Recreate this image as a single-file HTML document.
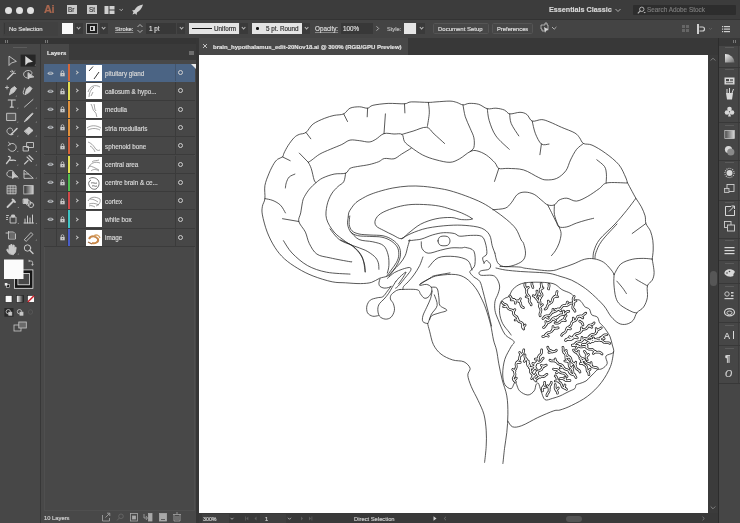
<!DOCTYPE html>
<html><head><meta charset="utf-8">
<style>
*{margin:0;padding:0;box-sizing:border-box}
html,body{width:740px;height:523px;overflow:hidden;background:#353535;font-family:"Liberation Sans",sans-serif;color:#d8d8d8;-webkit-font-smoothing:antialiased}
.t,.nm{will-change:transform;-webkit-text-stroke:0.18px currentColor}
.a{position:absolute}
.t{position:absolute;white-space:nowrap;font-size:6.2px;line-height:8px;color:#dcdcdc}
.chev{position:absolute;width:8px;height:11px;background:#3a3a3a}
.chev:after{content:"";position:absolute;left:2.6px;top:3.3px;width:2.2px;height:2.2px;border-right:0.9px solid #bbb;border-bottom:0.9px solid #bbb;transform:rotate(45deg)}
.row{position:absolute;left:44px;width:151px;height:18.3px;background:#474747;border-bottom:1px solid #3b3b3b}
.row .eye{position:absolute;left:0;top:0;width:13px;height:17.3px;border-right:1px solid #3b3b3b}
.row .lk{position:absolute;left:13px;top:0;width:10.5px;height:17.3px;border-right:1px solid #3b3b3b}
.row .bar{position:absolute;left:24px;top:0;width:2.3px;height:17.3px}
.row .th{position:absolute;left:41.5px;top:1px;width:15.7px;height:16px;background:#fff}
.row .nm{position:absolute;left:60.5px;top:5.7px;font-size:6.3px;line-height:8px;color:#d6d6d6;white-space:nowrap}
.row .sep{position:absolute;left:131px;top:0;width:1px;height:17.3px;background:#3b3b3b}
.row .ci{position:absolute;left:133.5px;top:6.2px;width:5px;height:5px;border:0.8px solid #cfcfcf;border-radius:50%}
.row .cv{position:absolute;left:31px;top:7.2px;width:3px;height:3px;border-right:0.9px solid #c8c8c8;border-top:0.9px solid #c8c8c8;transform:rotate(45deg)}
.dk{position:absolute;left:719px;width:21px;height:1px;background:#383838}
.dg{position:absolute;left:725px;width:9px;height:1px;background:#5a5a5a}
</style></head><body>
<!-- title bar -->
<div class="a" style="left:0;top:0;width:740px;height:19px;background:#3c3c3c"></div>
<div class="a" style="left:5px;top:6.5px;width:7px;height:7px;border-radius:50%;background:#e0e0e0"></div>
<div class="a" style="left:16px;top:6.5px;width:7px;height:7px;border-radius:50%;background:#e0e0e0"></div>
<div class="a" style="left:27px;top:6.5px;width:7px;height:7px;border-radius:50%;background:#e0e0e0"></div>
<div class="t" style="left:43.5px;top:2.5px;font-size:11px;line-height:12px;font-weight:bold;color:#a9674f;letter-spacing:-0.5px">Ai</div>
<div class="a" style="left:67px;top:5px;width:10px;height:9.3px;background:#c9c9c9"></div>
<div class="t" style="left:68.3px;top:5.6px;font-size:6.3px;line-height:8px;color:#3c3c3c">Br</div>
<div class="a" style="left:87px;top:5px;width:9.5px;height:9.3px;background:#c9c9c9"></div>
<div class="t" style="left:88.5px;top:5.6px;font-size:6.3px;line-height:8px;color:#3c3c3c">St</div>
<svg class="a" style="left:104px;top:5px" width="22" height="10" viewBox="0 0 22 10"><rect x="0.5" y="1" width="4" height="8" fill="#d0d0d0"/><rect x="5.5" y="1" width="5" height="3.5" fill="#d0d0d0"/><rect x="5.5" y="5.5" width="5" height="3.5" fill="#d0d0d0"/><path d="M15.5 4 L17.2 5.7 L18.9 4" stroke="#bbb" stroke-width="0.9" fill="none"/></svg>
<svg class="a" style="left:131px;top:3.5px" width="13" height="12" viewBox="0 0 13 12"><path d="M12 0.5 C8 1 5 3 3.5 6 L1 6.5 L2.5 8 L1.5 10.5 L4 9.5 L5.5 11 L6 8.5 C9 7 11 4 12 0.5Z" fill="#cfcfcf"/></svg>
<div class="t" style="left:549px;top:6.2px;font-size:7.2px;font-weight:bold;color:#d6d6d6">Essentials Classic</div>
<svg class="a" style="left:614px;top:6px" width="8" height="8"><path d="M1.5 3 L4 5.5 L6.5 3" stroke="#bbb" stroke-width="0.9" fill="none"/></svg>
<div class="a" style="left:633px;top:5px;width:103px;height:10px;background:#2d2d2d;border-radius:1px"></div>
<svg class="a" style="left:636px;top:6px" width="10" height="8"><circle cx="5.8" cy="3.3" r="2.2" stroke="#bdbdbd" stroke-width="0.9" fill="none"/><path d="M4.3 4.8 L1.8 7.3" stroke="#bdbdbd" stroke-width="1.1"/><path d="M7.5 6 L8.7 7.2 L9.9 6" fill="#bdbdbd"/></svg>
<div class="t" style="left:647px;top:6px;font-size:6.4px;color:#7a7a7a">Search Adobe Stock</div>

<!-- control bar -->
<div class="a" style="left:0;top:19px;width:740px;height:19px;background:#444444"></div>
<div class="a" style="left:0;top:18.5px;width:740px;height:1px;background:#333"></div>
<div class="a" style="left:3px;top:22px;width:55px;height:13.5px;background:#414141"></div>
<div class="a" style="left:4px;top:23px;width:1px;height:11px;background:#373737"></div>
<div class="t" style="left:8.5px;top:24.6px;font-size:5.95px">No Selection</div>
<div class="a" style="left:62px;top:23px;width:11px;height:11px;background:#fafafa"></div>
<div class="chev" style="left:74.5px;top:23px"></div>
<div class="a" style="left:86px;top:23px;width:12px;height:11px;background:#1e1e1e;border:1px solid #9a9a9a"></div>
<div class="a" style="left:89.5px;top:26px;width:5px;height:5px;background:#d0d0d0"></div>
<div class="a" style="left:90.7px;top:27.2px;width:2.6px;height:2.6px;background:#1e1e1e"></div>
<div class="chev" style="left:99.5px;top:23px"></div>
<div class="t" style="left:114.5px;top:24.5px;font-size:5.8px;text-decoration:underline;text-decoration-color:#888">Stroke:</div>
<svg class="a" style="left:136px;top:22px" width="8" height="13"><path d="M1.5 5 L4 2.5 L6.5 5 M1.5 8 L4 10.5 L6.5 8" stroke="#bdbdbd" stroke-width="0.9" fill="none"/></svg>
<div class="a" style="left:146px;top:23px;width:30px;height:11px;background:#383838"></div>
<div class="t" style="left:149px;top:24.5px;font-size:6.3px">1 pt</div>
<div class="chev" style="left:177px;top:23px"></div>
<div class="a" style="left:189px;top:23.3px;width:50px;height:10.7px;background:#e4e4e4"></div>
<div class="a" style="left:191.5px;top:28px;width:20px;height:1.4px;background:#111"></div>
<div class="t" style="left:214px;top:24.7px;font-size:6.3px;color:#333">Uniform</div>
<div class="chev" style="left:239.5px;top:23px"></div>
<div class="a" style="left:252px;top:23.3px;width:49.5px;height:10.7px;background:#e4e4e4"></div>
<div class="a" style="left:256px;top:27.3px;width:2.6px;height:2.6px;border-radius:50%;background:#111"></div>
<div class="t" style="left:266px;top:24.7px;font-size:6.3px;color:#333">5 pt. Round</div>
<div class="chev" style="left:302px;top:23px"></div>
<div class="t" style="left:315px;top:24.5px;font-size:6.3px;text-decoration:underline;text-decoration-color:#888">Opacity:</div>
<div class="a" style="left:341px;top:23px;width:32px;height:11px;background:#383838"></div>
<div class="t" style="left:343px;top:24.5px;font-size:6.3px">100%</div>
<svg class="a" style="left:374px;top:24px" width="7" height="9"><path d="M2.5 2.3 L4.7 4.5 L2.5 6.7" stroke="#bbb" stroke-width="0.9" fill="none"/></svg>
<div class="t" style="left:386.5px;top:24.5px;font-size:5.65px;color:#bdbdbd">Style:</div>
<div class="a" style="left:404px;top:23.3px;width:11.5px;height:10.7px;background:#e6e6e6"></div>
<div class="chev" style="left:417px;top:23px"></div>
<div class="a" style="left:432.5px;top:23px;width:56px;height:11px;background:#474747;border:1px solid #555;border-radius:1.5px"></div>
<div class="t" style="left:438px;top:24.5px;font-size:6.0px;color:#dedede">Document Setup</div>
<div class="a" style="left:491.5px;top:23px;width:41.5px;height:11px;background:#474747;border:1px solid #555;border-radius:1.5px"></div>
<div class="t" style="left:497px;top:24.5px;font-size:5.8px;color:#dedede">Preferences</div>
<svg class="a" style="left:538px;top:22px" width="22" height="13" viewBox="0 0 22 13"><path d="M3 3 h4 v-2 h2 v2 h1 v4 h-2 v2 h-4 v-2 h-1z" fill="none" stroke="#c8c8c8" stroke-width="0.8"/><path d="M6 5 L11 8 L8 8.6 L7 11 Z" fill="#d8d8d8"/><path d="M14 5 L16.2 7.2 L18.4 5" stroke="#bbb" stroke-width="0.9" fill="none"/></svg>
<svg class="a" style="left:680px;top:23px" width="55" height="12" viewBox="0 0 55 12"><g fill="#666"><rect x="2" y="2" width="3" height="3"/><rect x="6" y="2" width="3" height="3"/><rect x="2" y="6" width="3" height="3"/><rect x="6" y="6" width="3" height="3"/></g><rect x="17" y="1" width="2" height="10" fill="#cfcfcf"/><path d="M19.5 4 h3 a2 2 0 0 1 0 4 h-3" stroke="#cfcfcf" stroke-width="1.2" fill="none"/><path d="M29 5 L30.5 6.5 L32 5" stroke="#666" stroke-width="0.8" fill="none"/><g fill="#cfcfcf"><rect x="42" y="3" width="1.2" height="1.2"/><rect x="44" y="3" width="6" height="1.2"/><rect x="42" y="5.5" width="1.2" height="1.2"/><rect x="44" y="5.5" width="6" height="1.2"/><rect x="42" y="8" width="1.2" height="1.2"/><rect x="44" y="8" width="6" height="1.2"/></g></svg>

<!-- panel grip bar -->
<div class="a" style="left:0;top:38px;width:199px;height:6px;background:#353535"></div>
<div class="a" style="left:5px;top:40px;width:1px;height:3px;background:#7a7a7a"></div>
<div class="a" style="left:7px;top:40px;width:1px;height:3px;background:#7a7a7a"></div>
<div class="a" style="left:45px;top:40px;width:1px;height:3px;background:#7a7a7a"></div>
<div class="a" style="left:47px;top:40px;width:1px;height:3px;background:#7a7a7a"></div>

<!-- tools panel -->
<div class="a" style="left:0;top:44px;width:40px;height:479px;background:#474747"></div>
<div class="a" style="left:40px;top:44px;width:1.2px;height:479px;background:#373737"></div>
<div class="a" style="left:13px;top:47px;width:14px;height:1px;background:#5c5c5c"></div>
<svg class="a" style="left:0;top:0" width="41" height="340" viewBox="0 0 41 340">
<g fill="none" stroke="#c9c9c9" stroke-width="0.9" stroke-linejoin="round" stroke-linecap="round">
<!-- row1 selection -->
<path d="M9 56.5 L9 65.5 L11.3 63 L16 61.5 Z"/>
</g>
<rect x="20.6" y="54.6" width="15" height="12" fill="#262626"/>
<path d="M25.3 56 L25.3 65.5 L28 62.8 L33 61.8 Z" fill="#d6d6d6"/>
<path d="M34.5 65.5 l1.2 0 l0 -1.2z" fill="#aaa"/>
<g fill="none" stroke="#c9c9c9" stroke-width="0.9" stroke-linejoin="round" stroke-linecap="round">
<!-- row2 magic wand / lasso -->
<path d="M7.5 79 L13.5 73" stroke-width="1.5"/>
<path d="M12 70.3 l0.6 1.5 M14.5 71 l-1 1 M15.5 73.5 l-1.5 -0.3 M10.5 71.5 l1 0.5"/>
<path d="M27 78 C22 77 22.5 71 28 70.5 C32 70.5 33 73 31 75"/>
<path d="M28 73 L28 79 L30 77.5 L33.5 77 Z" fill="#c9c9c9"/>
<!-- row3 pen -->
<path d="M5.5 87.5 h3 M7 86 v3"/>
<path d="M9.5 94.5 L11 89 L14.5 86.5 L16.5 88.5 L14 92 Z" fill="#c9c9c9"/>
<path d="M23.5 94 C22 91 25 90 24.5 88"/>
<path d="M25 94.5 L26.5 89 L30 86.5 L32 88.5 L29.5 92 Z" fill="#c9c9c9"/>
<!-- row4 type / line -->
<path d="M8.3 100 h7 M11.8 100 v7.2 M10.3 107.2 h3" stroke-width="1.2"/>
<path d="M24.5 107 L33 99.5"/>
<!-- row5 rect / brush -->
<rect x="7" y="113.3" width="8.7" height="7.2" fill="#5a5a5a"/>
<path d="M24.5 121.5 L27 118 L32.5 113 L33 113.8 L28 119.3 Z" fill="#c9c9c9"/>
<!-- row6 shaper / eraser -->
<path d="M13 134.5 C9 136 5.5 132 7.5 129.3 C9.5 127 13 128 12.5 130.5"/>
<path d="M11 134.5 L17 128.5" stroke-width="1.6"/>
<path d="M24.5 131 L29 127 L33 130.5 L28.5 134.5 Z" fill="#c9c9c9"/>
<!-- row7 rotate / scale -->
<path d="M10 144 A4 4 0 1 1 8.5 149" />
<path d="M8.5 142.3 L10.5 144.2 L8.2 145.5"/>
<rect x="27" y="142.5" width="6.5" height="5"/>
<rect x="23.5" y="146.5" width="5" height="4.5"/>
<!-- row8 warp / pin -->
<path d="M6.5 163.5 L10 159 C11 157.5 9.5 156 8.5 156.5 M9 160 C11 161 13 159.5 15.5 160.5" stroke-width="1.3"/>
<path d="M24.5 164 L28 160.5 M27 157 L31.5 161.5 M29 155.5 L33 159.5" stroke-width="1.1"/>
<!-- row9 shape builder / perspective -->
<path d="M13 177 C8 178 5.5 175 7.5 172 C9.5 169.5 14 170 14 173"/>
<path d="M12.5 172 L12.5 178.5 L14.5 177 L17.5 177 Z" fill="#c9c9c9"/>
<path d="M24 178 L24 170 L33 178 Z"/><path d="M24 174 L28.5 174"/>
<!-- row10 mesh / gradient -->
<rect x="7.5" y="185.8" width="8.5" height="8" fill="#666"/>
<path d="M7.5 188.5 h8.5 M7.5 191 h8.5 M10.3 185.8 v8 M13 185.8 v8" stroke-width="0.6"/>
</g>
<defs><linearGradient id="gr" x1="0" x2="1"><stop offset="0" stop-color="#2a2a2a"/><stop offset="1" stop-color="#d0d0d0"/></linearGradient>
<linearGradient id="gr2" x1="0" x2="1"><stop offset="0" stop-color="#fff"/><stop offset="1" stop-color="#222"/></linearGradient></defs>
<rect x="23.8" y="185.6" width="9.4" height="8.4" fill="url(#gr)" stroke="#c9c9c9" stroke-width="0.8"/>
<g fill="none" stroke="#c9c9c9" stroke-width="0.9" stroke-linejoin="round" stroke-linecap="round">
<!-- row11 eyedropper / blend -->
<path d="M7.5 207 L14 200.5 M12.5 199.5 L15 202" stroke-width="1.8"/>
<rect x="23.5" y="199" width="4.5" height="4.5" fill="#c9c9c9"/>
<circle cx="31" cy="205" r="2.6"/><circle cx="28.5" cy="203" r="2.4"/>
<!-- row12 symbol / graph -->
<path d="M6.5 215.5 h2 M6.5 217.5 h1.2 M6.5 219.5 h1.2"/>
<rect x="10.5" y="217" width="5.5" height="6"/><rect x="12" y="215" width="2.5" height="2" fill="#c9c9c9"/>
<path d="M24 223 h9.5 M25 223 v-4 M27.5 223 v-7 M30 223 v-5 M32.5 223 v-8" stroke-width="1"/>
<!-- row13 artboard / slice -->
<path d="M6 233 h3 M8.5 231.5 v7.5 h7 v-5 l-2 -2 h-5"/>
<rect x="9.5" y="233" width="5.5" height="5.5" fill="#6a6a6a" stroke="none"/>
<path d="M24.5 239.5 L31 232.5 L33 234.5 L26.5 241 Z"/>
<!-- row14 hand / zoom -->
<path d="M9 253.5 C7 251 6 249.5 7.5 249 L9 250.5 L9 245.5 L10.2 245.5 L10.5 249 L10.8 244.5 L12 244.5 L12.2 249 L13 245 L14.2 245.2 L14.3 249.5 L15.2 247 L16.2 247.5 L15.5 252 L13.5 254.5 Z" fill="#c9c9c9"/>
<circle cx="27.5" cy="248" r="3.2" stroke-width="1"/><path d="M29.8 250.3 L33 253.5" stroke-width="1.4"/>
<!-- swap + default -->
<path d="M29.5 261 h1.6 a1.5 1.5 0 0 1 1.5 1.5 v2" stroke-width="0.8"/>
<path d="M28.8 260.3 v1.4 l1 -0.7z M31.8 264.5 h1.6 l-0.8 1z" fill="#c9c9c9" stroke-width="0.4"/>
</g>
<!-- stroke box -->
<rect x="14" y="269.5" width="19.3" height="19.2" fill="#e6e6e6"/>
<rect x="14.8" y="270.3" width="17.7" height="17.6" fill="#151515"/>
<rect x="17.5" y="273" width="12.3" height="12.2" fill="#e6e6e6"/>
<rect x="18.3" y="273.8" width="10.7" height="10.6" fill="#474747"/>
<!-- fill box -->
<rect x="4" y="259.5" width="19.5" height="19.5" fill="#fbfbfb"/>
<!-- default tiny -->
<rect x="6.5" y="284.5" width="3" height="3" fill="#1a1a1a" stroke="#ddd" stroke-width="0.6"/>
<rect x="4.8" y="283" width="2.6" height="2.6" fill="#eee"/>
<!-- color / gradient / none -->
<rect x="5.2" y="295.5" width="6.8" height="6.8" fill="#fafafa" stroke="#222" stroke-width="0.6"/>
<rect x="16.6" y="295.5" width="6.9" height="6.8" fill="url(#gr2)" stroke="#222" stroke-width="0.6"/>
<rect x="27.5" y="295.5" width="6.9" height="6.8" fill="#fafafa" stroke="#222" stroke-width="0.6"/>
<path d="M27.8 302 L34 295.8" stroke="#d0202a" stroke-width="1.5"/>
<!-- draw modes -->
<rect x="4.4" y="308" width="9.1" height="8.7" fill="#2a2a2a"/>
<g fill="none" stroke="#c9c9c9" stroke-width="0.8">
<circle cx="8.3" cy="311.7" r="2.2"/><rect x="8.8" y="312.2" width="3" height="3" fill="#c9c9c9"/>
<circle cx="19.5" cy="311.7" r="2.2"/><rect x="20" y="312.2" width="3" height="3" fill="#c9c9c9"/>
<circle cx="30.5" cy="312" r="2.2" stroke="#5a5a5a"/>
<!-- screen mode -->
<rect x="14" y="325" width="7" height="6" />
<rect x="18.8" y="322" width="7.5" height="6" fill="#6a6a6a"/>
</g>
<!-- small corner triangles -->
<g fill="#b0b0b0">
<path d="M15.5 96.5 l1.2 0 l0 -1.2z"/><path d="M17 108.5 l1.2 0 l0 -1.2z"/><path d="M35.5 108.5 l1.2 0 l0 -1.2z"/>
<path d="M17 122.5 l1.2 0 l0 -1.2z"/><path d="M35.5 122.5 l1.2 0 l0 -1.2z"/><path d="M17 136.5 l1.2 0 l0 -1.2z"/><path d="M35.5 136.5 l1.2 0 l0 -1.2z"/>
<path d="M17 152 l1.2 0 l0 -1.2z"/><path d="M35.5 152 l1.2 0 l0 -1.2z"/><path d="M17 165.5 l1.2 0 l0 -1.2z"/><path d="M35.5 165.5 l1.2 0 l0 -1.2z"/>
<path d="M17.5 178.5 l1.2 0 l0 -1.2z"/><path d="M35.5 178.5 l1.2 0 l0 -1.2z"/><path d="M17.5 208 l1.2 0 l0 -1.2z"/>
<path d="M17.5 224 l1.2 0 l0 -1.2z"/><path d="M35.5 224 l1.2 0 l0 -1.2z"/><path d="M35.5 240.5 l1.2 0 l0 -1.2z"/><path d="M17.5 254.5 l1.2 0 l0 -1.2z"/>
</g>
</svg>


<!-- layers panel -->
<div class="a" style="left:41.2px;top:44px;width:155px;height:479px;background:#484848"></div>
<div class="a" style="left:69px;top:44px;width:127px;height:16px;background:#3a3a3a"></div>
<div class="t" style="left:46.5px;top:49px;font-size:6.0px;font-weight:bold;color:#e2e2e2">Layers</div>
<div class="a" style="left:188.5px;top:50.5px;width:5.5px;height:4px;background:#6e6e6e"></div>
<div class="a" style="left:44px;top:64px;width:151px;height:447px;border:1px solid #4f4f4f;border-top:none"></div>
<div class="row" style="top:64.0px;background:#4b6484;border-bottom-color:#4b6484"><div class="eye" style="border-right-color:#4b6484"><svg class="a" style="left:2.8px;top:6.6px" width="8" height="5"><path d="M0.3 2.2 C1.8 0.1 5.2 0.1 6.7 2.2 C5.2 4.3 1.8 4.3 0.3 2.2Z" fill="#c4c8cc"/><ellipse cx="3.5" cy="2.2" rx="1.6" ry="1.1" fill="#4b6484" opacity="0.55"/></svg></div><div class="lk" style="border-right-color:#4b6484"><svg class="a" style="left:2.7px;top:5.5px" width="5" height="7"><path d="M1.2 3 V2 a1.3 1.3 0 0 1 2.6 0 V3" stroke="#c8c8c8" stroke-width="0.8" fill="none"/><rect x="0.3" y="3" width="4.4" height="3.3" fill="#c8c8c8"/><rect x="2.2" y="4" width="0.6" height="1.2" fill="#4b6484"/></svg></div><div class="bar" style="background:#d4673a"></div><div class="cv"></div><svg class="a" style="left:41.5px;top:1px" width="16" height="16"><rect width="16" height="16" fill="#fff"/><g fill="none" stroke="#222" stroke-width="0.9"><path d="M3 6 L7 1.5 M8 14 L13 7" /></g></svg><div class="nm">pituitary gland</div><div class="sep" style="background:#42556e"></div><div class="ci"></div><svg class="a" style="left:146.5px;top:0" width="5" height="5"><path d="M0 0 H5 V5Z" fill="#e8e8e8"/></svg></div>
<div class="row" style="top:82.3px;background:#474747;border-bottom-color:#3b3b3b"><div class="eye" style="border-right-color:#3b3b3b"><svg class="a" style="left:2.8px;top:6.6px" width="8" height="5"><path d="M0.3 2.2 C1.8 0.1 5.2 0.1 6.7 2.2 C5.2 4.3 1.8 4.3 0.3 2.2Z" fill="#c4c8cc"/><ellipse cx="3.5" cy="2.2" rx="1.6" ry="1.1" fill="#474747" opacity="0.55"/></svg></div><div class="lk" style="border-right-color:#3b3b3b"><svg class="a" style="left:2.7px;top:5.5px" width="5" height="7"><path d="M1.2 3 V2 a1.3 1.3 0 0 1 2.6 0 V3" stroke="#c8c8c8" stroke-width="0.8" fill="none"/><rect x="0.3" y="3" width="4.4" height="3.3" fill="#c8c8c8"/><rect x="2.2" y="4" width="0.6" height="1.2" fill="#474747"/></svg></div><div class="bar" style="background:#e3de52"></div><div class="cv"></div><svg class="a" style="left:41.5px;top:1px" width="16" height="16"><rect width="16" height="16" fill="#fff"/><g fill="none" stroke="#666" stroke-width="0.6"><path d="M2 9 C4 3 9 1 14 4 M3 14 C3 10 5 6 8 4 M5 13 L7 9" /></g></svg><div class="nm">callosum &amp; hypo...</div><div class="sep" style="background:#3b3b3b"></div><div class="ci"></div></div>
<div class="row" style="top:100.6px;background:#474747;border-bottom-color:#3b3b3b"><div class="eye" style="border-right-color:#3b3b3b"><svg class="a" style="left:2.8px;top:6.6px" width="8" height="5"><path d="M0.3 2.2 C1.8 0.1 5.2 0.1 6.7 2.2 C5.2 4.3 1.8 4.3 0.3 2.2Z" fill="#c4c8cc"/><ellipse cx="3.5" cy="2.2" rx="1.6" ry="1.1" fill="#474747" opacity="0.55"/></svg></div><div class="lk" style="border-right-color:#3b3b3b"><svg class="a" style="left:2.7px;top:5.5px" width="5" height="7"><path d="M1.2 3 V2 a1.3 1.3 0 0 1 2.6 0 V3" stroke="#c8c8c8" stroke-width="0.8" fill="none"/><rect x="0.3" y="3" width="4.4" height="3.3" fill="#c8c8c8"/><rect x="2.2" y="4" width="0.6" height="1.2" fill="#474747"/></svg></div><div class="bar" style="background:#e0913c"></div><div class="cv"></div><svg class="a" style="left:41.5px;top:1px" width="16" height="16"><rect width="16" height="16" fill="#fff"/><g fill="none" stroke="#666" stroke-width="0.6"><path d="M5 2 C7 5 6 8 9 10 C11 12 10 14 11 15 M8 2 C9 5 8 7 10 9" /></g></svg><div class="nm">medulla</div><div class="sep" style="background:#3b3b3b"></div><div class="ci"></div></div>
<div class="row" style="top:118.9px;background:#474747;border-bottom-color:#3b3b3b"><div class="eye" style="border-right-color:#3b3b3b"><svg class="a" style="left:2.8px;top:6.6px" width="8" height="5"><path d="M0.3 2.2 C1.8 0.1 5.2 0.1 6.7 2.2 C5.2 4.3 1.8 4.3 0.3 2.2Z" fill="#c4c8cc"/><ellipse cx="3.5" cy="2.2" rx="1.6" ry="1.1" fill="#474747" opacity="0.55"/></svg></div><div class="lk" style="border-right-color:#3b3b3b"><svg class="a" style="left:2.7px;top:5.5px" width="5" height="7"><path d="M1.2 3 V2 a1.3 1.3 0 0 1 2.6 0 V3" stroke="#c8c8c8" stroke-width="0.8" fill="none"/><rect x="0.3" y="3" width="4.4" height="3.3" fill="#c8c8c8"/><rect x="2.2" y="4" width="0.6" height="1.2" fill="#474747"/></svg></div><div class="bar" style="background:#e0913c"></div><div class="cv"></div><svg class="a" style="left:41.5px;top:1px" width="16" height="16"><rect width="16" height="16" fill="#fff"/><g fill="none" stroke="#666" stroke-width="0.6"><path d="M1 8 C5 5 10 5 15 8 M2 10 C6 8 10 8 14 10" /></g></svg><div class="nm">stria medullaris</div><div class="sep" style="background:#3b3b3b"></div><div class="ci"></div></div>
<div class="row" style="top:137.2px;background:#474747;border-bottom-color:#3b3b3b"><div class="eye" style="border-right-color:#3b3b3b"></div><div class="lk" style="border-right-color:#3b3b3b"><svg class="a" style="left:2.7px;top:5.5px" width="5" height="7"><path d="M1.2 3 V2 a1.3 1.3 0 0 1 2.6 0 V3" stroke="#c8c8c8" stroke-width="0.8" fill="none"/><rect x="0.3" y="3" width="4.4" height="3.3" fill="#c8c8c8"/><rect x="2.2" y="4" width="0.6" height="1.2" fill="#474747"/></svg></div><div class="bar" style="background:#d2603a"></div><div class="cv"></div><svg class="a" style="left:41.5px;top:1px" width="16" height="16"><rect width="16" height="16" fill="#fff"/><g fill="none" stroke="#666" stroke-width="0.6"><path d="M2 4 C5 5 7 7 9 10 C10 12 12 13 14 12 M4 8 C6 9 8 11 9 14" /></g></svg><div class="nm">sphenoid bone</div><div class="sep" style="background:#3b3b3b"></div><div class="ci"></div></div>
<div class="row" style="top:155.5px;background:#474747;border-bottom-color:#3b3b3b"><div class="eye" style="border-right-color:#3b3b3b"><svg class="a" style="left:2.8px;top:6.6px" width="8" height="5"><path d="M0.3 2.2 C1.8 0.1 5.2 0.1 6.7 2.2 C5.2 4.3 1.8 4.3 0.3 2.2Z" fill="#c4c8cc"/><ellipse cx="3.5" cy="2.2" rx="1.6" ry="1.1" fill="#474747" opacity="0.55"/></svg></div><div class="lk" style="border-right-color:#3b3b3b"><svg class="a" style="left:2.7px;top:5.5px" width="5" height="7"><path d="M1.2 3 V2 a1.3 1.3 0 0 1 2.6 0 V3" stroke="#c8c8c8" stroke-width="0.8" fill="none"/><rect x="0.3" y="3" width="4.4" height="3.3" fill="#c8c8c8"/><rect x="2.2" y="4" width="0.6" height="1.2" fill="#474747"/></svg></div><div class="bar" style="background:#e3de52"></div><div class="cv"></div><svg class="a" style="left:41.5px;top:1px" width="16" height="16"><rect width="16" height="16" fill="#fff"/><g fill="none" stroke="#666" stroke-width="0.6"><path d="M2 12 C4 6 9 4 14 6 M3 9 C6 9 9 11 13 13 M5 14 C7 12 10 12 13 14 M6 5 C8 3 11 4 13 3" /></g></svg><div class="nm">central area</div><div class="sep" style="background:#3b3b3b"></div><div class="ci"></div></div>
<div class="row" style="top:173.8px;background:#474747;border-bottom-color:#3b3b3b"><div class="eye" style="border-right-color:#3b3b3b"><svg class="a" style="left:2.8px;top:6.6px" width="8" height="5"><path d="M0.3 2.2 C1.8 0.1 5.2 0.1 6.7 2.2 C5.2 4.3 1.8 4.3 0.3 2.2Z" fill="#c4c8cc"/><ellipse cx="3.5" cy="2.2" rx="1.6" ry="1.1" fill="#474747" opacity="0.55"/></svg></div><div class="lk" style="border-right-color:#3b3b3b"><svg class="a" style="left:2.7px;top:5.5px" width="5" height="7"><path d="M1.2 3 V2 a1.3 1.3 0 0 1 2.6 0 V3" stroke="#c8c8c8" stroke-width="0.8" fill="none"/><rect x="0.3" y="3" width="4.4" height="3.3" fill="#c8c8c8"/><rect x="2.2" y="4" width="0.6" height="1.2" fill="#474747"/></svg></div><div class="bar" style="background:#4fbf4f"></div><div class="cv"></div><svg class="a" style="left:41.5px;top:1px" width="16" height="16"><rect width="16" height="16" fill="#fff"/><g fill="none" stroke="#666" stroke-width="0.6"><path d="M3 4 C5 2 9 2 12 5 C14 8 13 12 10 14 C7 15 4 13 3 10 C2 8 3 6 5 5 M5 8 C7 7 9 9 11 8 M6 11 C8 10 9 12 11 11" stroke-width="0.9"/></g></svg><div class="nm">centre brain &amp; ce...</div><div class="sep" style="background:#3b3b3b"></div><div class="ci"></div></div>
<div class="row" style="top:192.1px;background:#474747;border-bottom-color:#3b3b3b"><div class="eye" style="border-right-color:#3b3b3b"><svg class="a" style="left:2.8px;top:6.6px" width="8" height="5"><path d="M0.3 2.2 C1.8 0.1 5.2 0.1 6.7 2.2 C5.2 4.3 1.8 4.3 0.3 2.2Z" fill="#c4c8cc"/><ellipse cx="3.5" cy="2.2" rx="1.6" ry="1.1" fill="#474747" opacity="0.55"/></svg></div><div class="lk" style="border-right-color:#3b3b3b"><svg class="a" style="left:2.7px;top:5.5px" width="5" height="7"><path d="M1.2 3 V2 a1.3 1.3 0 0 1 2.6 0 V3" stroke="#c8c8c8" stroke-width="0.8" fill="none"/><rect x="0.3" y="3" width="4.4" height="3.3" fill="#c8c8c8"/><rect x="2.2" y="4" width="0.6" height="1.2" fill="#474747"/></svg></div><div class="bar" style="background:#cf4a4a"></div><div class="cv"></div><svg class="a" style="left:41.5px;top:1px" width="16" height="16"><rect width="16" height="16" fill="#fff"/><g fill="none" stroke="#666" stroke-width="0.6"><path d="M2 8 C4 4 9 3 14 6 C15 9 13 12 10 13 M3 11 C6 10 9 10 13 12 M4 6 C7 6 9 7 12 9 M3 13 C5 12 7 13 9 14" /></g></svg><div class="nm">cortex</div><div class="sep" style="background:#3b3b3b"></div><div class="ci"></div></div>
<div class="row" style="top:210.4px;background:#474747;border-bottom-color:#3b3b3b"><div class="eye" style="border-right-color:#3b3b3b"><svg class="a" style="left:2.8px;top:6.6px" width="8" height="5"><path d="M0.3 2.2 C1.8 0.1 5.2 0.1 6.7 2.2 C5.2 4.3 1.8 4.3 0.3 2.2Z" fill="#c4c8cc"/><ellipse cx="3.5" cy="2.2" rx="1.6" ry="1.1" fill="#474747" opacity="0.55"/></svg></div><div class="lk" style="border-right-color:#3b3b3b"><svg class="a" style="left:2.7px;top:5.5px" width="5" height="7"><path d="M1.2 3 V2 a1.3 1.3 0 0 1 2.6 0 V3" stroke="#c8c8c8" stroke-width="0.8" fill="none"/><rect x="0.3" y="3" width="4.4" height="3.3" fill="#c8c8c8"/><rect x="2.2" y="4" width="0.6" height="1.2" fill="#474747"/></svg></div><div class="bar" style="background:#3fc4c4"></div><div class="cv"></div><svg class="a" style="left:41.5px;top:1px" width="16" height="16"><rect width="16" height="16" fill="#fff"/><g fill="none" stroke="#666" stroke-width="0.6"></g></svg><div class="nm">white box</div><div class="sep" style="background:#3b3b3b"></div><div class="ci"></div></div>
<div class="row" style="top:228.7px;background:#474747;border-bottom-color:#3b3b3b"><div class="eye" style="border-right-color:#3b3b3b"></div><div class="lk" style="border-right-color:#3b3b3b"><svg class="a" style="left:2.7px;top:5.5px" width="5" height="7"><path d="M1.2 3 V2 a1.3 1.3 0 0 1 2.6 0 V3" stroke="#c8c8c8" stroke-width="0.8" fill="none"/><rect x="0.3" y="3" width="4.4" height="3.3" fill="#c8c8c8"/><rect x="2.2" y="4" width="0.6" height="1.2" fill="#474747"/></svg></div><div class="bar" style="background:#4a5ec8"></div><div class="cv"></div><svg class="a" style="left:41.5px;top:1px" width="16" height="16"><rect width="16" height="16" fill="#fff"/><g fill="none" stroke="#666" stroke-width="0.6"><path d="M3 9 C5 5 10 6 12 9 C13 12 9 14 6 13" stroke="#c8884a" stroke-width="2"/><path d="M8 6 C10 4 13 5 14 8" stroke="#d8a060" stroke-width="1.5"/><path d="M2 12 L6 14" stroke="#a06a40" stroke-width="1.3"/></g></svg><div class="nm">image</div><div class="sep" style="background:#3b3b3b"></div><div class="ci"></div></div>
<div class="t" style="left:44.3px;top:514px;font-size:5.8px;color:#d0d0d0">10 Layers</div>
<svg class="a" style="left:100px;top:511px" width="90" height="12" viewBox="0 0 90 12">
<g fill="none" stroke="#a8a8a8" stroke-width="0.8">
<path d="M2.5 4 v6 h7 v-3"/><path d="M5.5 6.5 L9.5 2.5 M7 2.2 h2.8 v2.8"/>
<circle cx="21" cy="5.3" r="2.3" stroke="#6a6a6a"/><path d="M19.3 7 L17 9.5" stroke="#6a6a6a"/>
<rect x="30.5" y="2.5" width="7" height="7.5"/><rect x="32.5" y="5" width="3" height="3" fill="#a8a8a8"/>
<path d="M44 3 v4 h3 M46 5 l1.5 2 l-1.5 2"/><rect x="48.5" y="2.5" width="3.5" height="7.5" fill="#a8a8a8"/>
<rect x="59.5" y="2.5" width="7" height="7.5" fill="#a8a8a8"/><path d="M61 8.5 h4" stroke="#484848"/>
<path d="M73 3.5 h8 M74 3.5 v6.5 h6 v-6.5 M76 2 h2 M76 5 v4 M78 5 v4"/>
</g></svg>

<div class="a" style="left:196px;top:38px;width:3px;height:485px;background:#363636"></div>

<!-- tab bar -->
<div class="a" style="left:199px;top:38px;width:519px;height:16.6px;background:#383838"></div>
<div class="a" style="left:199px;top:38px;width:209px;height:16.6px;background:#484848"></div>
<svg class="a" style="left:202px;top:43px" width="6" height="6"><path d="M1 1 L5 5 M5 1 L1 5" stroke="#cfcfcf" stroke-width="0.9"/></svg>
<div class="t" style="left:213px;top:43px;font-size:6.0px;font-weight:bold;color:#e0e0e0">brain_hypothalamus_edit-20Nov18.ai @ 300% (RGB/GPU Preview)</div>

<!-- canvas -->
<div class="a" style="left:199px;top:54.6px;width:509.2px;height:458.8px;background:#fff"></div>
<svg class="a" style="left:0;top:0" width="740" height="523" viewBox="0 0 740 523"><g fill="none" stroke="#222" stroke-width="0.75" stroke-linejoin="round" stroke-linecap="round"><path d="M627.4 182.7 C627.1 181.8 626.9 180.0 625.5 177.0 C624.1 174.0 622.1 168.6 618.8 164.6 C615.4 160.6 609.9 156.3 605.4 153.1 C600.9 149.8 595.6 146.7 592.0 145.1 C588.4 143.5 585.6 144.7 583.5 143.5 C581.4 142.3 581.0 139.6 579.6 137.8 C578.2 136.1 577.9 134.8 574.9 133.0 C571.9 131.2 565.6 129.1 561.5 127.3 C557.4 125.5 553.3 123.4 550.0 122.1 C546.7 120.8 544.8 119.8 541.8 119.6 C538.8 119.4 534.7 121.9 532.2 121.1 C529.7 120.2 528.9 116.0 526.9 114.5 C524.9 113.0 522.9 112.4 520.0 112.3 C517.1 112.2 512.3 114.3 509.7 113.9 C507.1 113.5 506.8 111.0 504.5 110.1 C502.2 109.1 498.8 108.4 495.9 108.2 C493.0 108.0 490.2 109.4 487.3 108.7 C484.4 108.0 481.7 105.2 478.7 104.3 C475.7 103.4 471.7 103.3 469.1 103.4 C466.5 103.5 465.1 105.1 463.0 104.9 C460.9 104.7 458.9 103.0 456.7 102.4 C454.5 101.8 453.4 101.2 450.0 101.1 C446.6 101.0 439.6 101.7 436.0 101.9 C432.4 102.1 432.5 102.4 428.4 102.4 C424.3 102.4 415.2 101.7 411.2 101.9 C407.2 102.1 408.3 103.5 404.5 103.8 C400.7 104.0 393.5 103.2 388.2 103.4 C382.9 103.7 376.3 104.5 372.9 105.3 C369.5 106.1 369.8 108.0 367.6 108.2 C365.4 108.5 362.5 106.8 359.6 106.8 C356.7 106.8 352.6 107.0 350.0 108.2 C347.4 109.4 346.3 112.7 343.7 113.9 C341.1 115.1 337.3 114.7 334.1 115.4 C330.9 116.1 328.1 116.9 324.6 118.3 C321.1 119.7 316.2 121.7 313.1 124.0 C310.0 126.3 308.3 130.7 306.0 132.4 C303.7 134.1 301.2 133.6 299.3 134.4 C297.4 135.2 296.2 135.6 294.4 137.4 C292.5 139.2 289.9 142.8 288.2 145.4 C286.5 148.0 284.9 151.2 284.0 153.1 C283.1 155.0 283.6 155.9 282.5 156.9 C281.4 157.9 279.1 158.1 277.7 159.2 C276.3 160.3 275.3 161.3 273.9 163.6 C272.5 165.9 270.6 169.5 269.1 173.2 C267.6 176.9 265.6 181.4 264.9 185.6 C264.2 189.8 265.3 195.1 264.9 198.6 C264.5 202.1 262.8 203.6 262.4 206.3 C262.0 209.0 261.6 210.6 262.4 214.9 C263.2 219.2 265.1 226.7 267.2 232.1 C269.3 237.5 272.0 242.9 274.9 247.4 C277.8 251.9 280.6 255.3 284.4 258.8 C288.2 262.3 293.0 265.5 297.8 268.4 C302.6 271.3 307.4 273.8 313.1 276.0 C318.8 278.2 326.8 280.7 332.2 281.8 C337.6 282.9 340.6 282.5 345.3 282.8 C350.0 283.1 356.2 283.7 360.6 283.6 C365.0 283.5 368.4 283.3 371.5 282.4 C374.6 281.5 376.8 279.4 379.5 278.3 C382.2 277.2 385.4 277.2 387.7 275.9 C389.9 274.6 391.0 272.5 393.0 270.5 C395.0 268.5 397.7 266.2 399.7 263.8 C401.7 261.4 403.8 258.7 405.1 255.8 C406.5 252.9 407.0 249.1 407.8 246.4 C408.6 243.7 409.5 240.8 409.8 239.7"/><path d="M627.4 182.7 C628.2 184.1 630.7 188.8 632.1 191.4 C633.5 194.0 634.4 195.8 635.9 198.3 C637.4 200.9 639.8 203.8 641.3 206.7 C642.8 209.6 644.3 213.1 645.1 215.9 C645.9 218.7 645.0 220.9 645.9 223.5 C646.8 226.1 649.4 228.4 650.5 231.2 C651.6 234.0 652.3 237.2 652.8 240.3 C653.2 243.4 653.3 246.9 653.2 250.0 C653.1 253.1 652.4 257.6 652.2 259.1"/><path d="M652.2 259.1 C652.5 261.3 654.1 269.0 654.1 272.5 C654.1 276.0 653.3 278.0 652.2 280.2 C651.1 282.4 648.2 283.0 647.4 285.9 C646.6 288.8 648.0 293.9 647.4 297.4 C646.8 300.9 645.4 304.4 643.6 307.0 C641.9 309.6 638.6 310.5 636.9 312.7 C635.1 314.9 634.9 318.5 633.1 320.4 C631.4 322.3 628.8 323.7 626.4 324.2 C624.0 324.7 621.2 324.6 618.7 323.3 C616.2 322.0 613.6 319.5 611.1 316.6 C608.6 313.7 607.1 309.6 604.0 305.9 C600.9 302.2 596.0 297.6 592.5 294.4 C589.0 291.2 586.5 289.2 583.0 286.8 C579.5 284.4 575.3 281.9 571.5 280.1 C567.7 278.4 563.6 277.4 560.0 276.3 C556.4 275.2 554.0 274.2 550.0 273.5 C546.0 272.8 540.8 272.6 535.9 272.3 C531.0 272.0 525.7 271.9 520.6 271.5 C515.5 271.1 509.4 270.6 505.3 270.0 C501.2 269.4 497.6 268.3 496.0 268.0"/><path d="M343.7 113.9 L347.5 121.5"/><path d="M306.0 132.4 L310.8 138.8"/><path d="M282.5 156.9 L290.2 160.7"/><path d="M367.6 108.2 L367.2 116.8"/><path d="M404.5 103.8 L404.9 112.9"/><path d="M385.4 113.9 L384.0 133.6"/><path d="M428.4 102.4 C428.5 104.2 429.5 108.9 429.3 112.9 C429.1 116.9 427.7 124.1 427.4 126.3"/><path d="M463.0 104.9 C463.4 106.9 464.1 112.9 465.3 116.8 C466.5 120.7 468.7 124.7 470.1 128.2 C471.5 131.7 473.3 134.6 473.9 137.8 C474.5 141.0 474.5 145.1 473.9 147.4 C473.3 149.7 470.7 150.9 470.1 151.6"/><path d="M487.3 108.7 C487.6 110.7 487.8 116.1 489.2 120.6 C490.6 125.1 492.5 131.1 495.9 135.9 C499.2 140.7 507.1 147.1 509.3 149.3"/><path d="M509.7 113.9 C509.9 115.5 509.7 119.8 511.2 123.5 C512.7 127.2 517.5 133.8 518.8 135.9"/><path d="M532.2 121.1 C532.7 123.1 533.8 129.5 535.3 133.3 C536.8 137.1 539.1 142.2 541.4 144.0 C543.7 145.8 547.7 144.0 549.0 144.0"/><path d="M541.4 144.0 L539.9 154.7"/><path d="M264.9 198.6 C266.2 198.9 270.3 199.4 272.9 200.5 C275.5 201.6 278.5 203.2 280.6 205.3 C282.7 207.4 284.6 211.6 285.4 212.9"/><path d="M294.9 174.1 C293.9 174.6 290.6 175.6 289.2 177.0 C287.8 178.4 286.9 180.9 286.3 182.7 C285.7 184.5 285.5 187.1 285.4 188.0"/><path d="M596.8 159.8 C598.1 160.9 602.9 164.1 604.5 166.5 C606.1 168.9 606.1 171.3 606.4 174.1 C606.7 176.8 606.1 181.5 606.1 183.0"/><path d="M583.5 143.5 C582.4 144.5 578.8 146.6 576.6 149.3 C574.4 152.1 572.3 156.4 570.5 160.0 C568.7 163.6 568.2 167.6 565.9 170.7 C563.6 173.8 560.0 176.9 556.7 178.4 C553.4 179.9 549.0 180.0 546.0 179.9 C543.0 179.8 542.5 179.3 538.8 177.6 C535.0 175.9 528.6 171.4 523.5 169.9 C518.4 168.4 512.3 168.7 508.2 168.4 C504.1 168.2 501.0 169.4 498.8 168.4 C496.6 167.4 497.0 164.9 494.9 162.7 C492.8 160.5 489.3 157.0 486.3 155.0 C483.3 153.0 479.5 151.4 476.8 150.8 C474.1 150.2 473.0 150.3 470.1 151.6 C467.2 152.9 463.0 157.0 459.6 158.8 C456.2 160.6 453.9 162.1 450.0 162.3 C446.1 162.5 440.6 161.0 436.0 159.8 C431.4 158.6 426.8 157.1 422.7 155.0 C418.6 152.9 414.2 149.6 411.2 147.4 C408.2 145.2 406.0 143.8 404.5 141.6 C403.0 139.4 403.8 135.7 402.0 134.4 C400.2 133.1 397.0 134.1 394.0 134.0 C391.0 133.9 387.0 132.7 384.0 133.6 C381.0 134.5 378.3 137.9 375.8 139.3 C373.3 140.7 371.8 141.8 369.1 142.0 C366.4 142.2 362.8 141.0 359.6 140.7 C356.4 140.4 353.0 139.5 350.0 140.1 C347.0 140.7 345.1 143.0 341.8 144.5 C338.5 146.0 334.0 147.7 330.3 149.3 C326.6 150.9 322.8 152.3 319.8 154.1 C316.8 155.8 314.0 158.4 312.1 159.8 C310.2 161.2 308.9 161.9 308.3 162.3"/><path d="M498.8 168.4 L494.5 181.4"/><path d="M402.0 134.4 C403.9 133.8 409.0 132.3 413.1 131.1 C417.2 129.9 423.0 126.8 426.5 127.3 C430.0 127.8 431.1 131.3 434.1 134.0 C437.1 136.7 442.9 141.9 444.6 143.5"/><path d="M308.3 162.3 L299.3 153.1"/><path d="M411.2 148.3 C409.6 149.3 404.5 152.3 401.6 154.1 C398.7 155.8 396.9 158.1 394.0 158.8 C391.1 159.5 386.9 158.0 384.4 158.5 C381.8 159.0 381.2 160.7 378.7 161.7 C376.1 162.7 372.6 163.8 369.1 164.6 C365.6 165.4 360.8 165.9 357.6 166.5 C354.4 167.1 352.0 167.3 350.0 168.4 C348.0 169.5 348.2 172.2 345.6 173.2 C343.0 174.1 337.9 173.3 334.1 174.1 C330.3 174.9 325.7 176.6 322.7 178.0 C319.7 179.4 318.2 180.9 316.0 182.7 C313.8 184.5 311.4 186.7 309.5 189.0 C307.6 191.3 305.6 194.4 304.5 196.5 C303.4 198.6 303.2 198.8 302.6 201.5 C302.0 204.2 301.3 209.6 300.7 212.9 C300.1 216.2 298.0 218.3 298.8 221.5 C299.6 224.7 303.6 228.4 305.4 232.1 C307.1 235.8 307.4 239.8 309.3 243.5 C311.2 247.2 313.4 251.7 316.9 254.1 C320.4 256.5 324.8 256.6 330.3 257.9 C335.8 259.2 346.5 261.1 350.0 261.7 C353.5 262.3 351.2 261.4 351.4 261.4"/><path d="M308.3 162.3 C308.8 163.3 310.2 165.5 311.2 168.4 C312.2 171.3 313.3 177.5 314.1 179.9 C314.9 182.3 315.7 182.2 316.0 182.7"/><path d="M298.8 221.5 L282.5 218.7"/><path d="M283.5 240.7 C284.9 242.8 288.1 249.0 292.1 253.1 C296.1 257.2 301.7 262.3 307.4 265.5 C313.1 268.7 319.4 270.8 326.5 272.2 C333.6 273.6 346.1 273.8 350.0 274.1"/><path d="M345.6 173.2 C345.3 174.6 345.0 179.6 343.7 181.8 C342.4 184.0 340.0 184.5 338.0 186.5 C336.0 188.5 333.3 190.9 331.5 194.0 C329.7 197.1 327.8 201.2 327.0 205.3 C326.2 209.4 325.3 214.2 326.5 218.7 C327.7 223.2 330.9 228.3 334.1 232.1 C337.3 235.9 342.5 239.2 345.6 241.6 C348.7 244.0 350.4 244.1 352.9 246.3 C355.4 248.5 358.7 251.9 360.6 254.8 C362.5 257.7 363.6 261.1 364.4 263.9 C365.2 266.7 365.1 270.3 365.2 271.6"/><path d="M330.0 228.8 C331.5 230.6 335.4 236.7 339.2 239.5 C343.0 242.3 348.6 243.8 352.9 245.6 C357.2 247.4 361.6 248.4 365.2 250.2 C368.8 252.0 372.1 254.3 374.3 256.3 C376.5 258.3 377.4 260.2 378.2 262.4 C379.0 264.6 378.8 268.1 378.9 269.3"/><path d="M492.9 209.7 C494.9 209.4 502.1 209.3 505.2 208.2 C508.3 207.0 509.3 205.1 511.3 202.8 C513.3 200.5 515.1 196.2 517.4 194.4 C519.7 192.6 522.2 192.1 525.0 192.1 C527.8 192.1 531.4 193.0 534.2 194.4 C537.0 195.8 539.6 198.8 541.9 200.5 C544.1 202.2 545.6 204.2 547.7 204.9 C549.8 205.6 552.5 205.7 554.4 204.9 C556.3 204.1 557.0 201.2 559.1 200.1 C561.2 199.0 563.9 198.0 566.8 198.2 C569.7 198.4 572.9 201.4 576.4 201.1 C579.9 200.8 584.0 198.4 587.8 196.3 C591.6 194.2 596.1 190.8 599.3 188.6 C602.5 186.4 602.4 183.8 607.0 182.9 C611.6 182.0 623.5 183.0 626.8 183.0"/><path d="M547.7 204.9 C548.3 206.2 550.1 209.6 551.5 212.5 C552.9 215.4 555.0 219.7 556.3 222.1 C557.6 224.5 557.4 226.1 559.1 226.9 C560.9 227.7 563.9 227.5 566.8 226.9 C569.7 226.3 573.2 224.2 576.4 223.1 C579.6 222.0 583.0 221.0 585.9 220.2 C588.8 219.4 592.3 218.6 593.6 218.3"/><path d="M554.4 204.9 C554.4 206.5 553.9 211.4 554.4 214.4 C554.9 217.4 556.4 221.0 557.2 223.1 C558.0 225.2 558.8 226.3 559.1 226.9"/><path d="M559.1 226.9 C559.4 228.0 561.1 230.9 561.1 233.6 C561.1 236.3 560.1 240.3 559.1 243.2 C558.1 246.1 556.6 248.7 555.3 250.8 C554.0 252.9 552.1 254.8 551.5 255.6"/><path d="M635.9 198.3 C634.3 200.4 630.0 206.3 626.5 210.6 C623.0 214.9 619.5 219.2 615.0 224.0 C610.5 228.8 603.2 234.9 599.7 239.3 C596.2 243.8 595.1 247.5 594.0 250.7 C592.9 253.9 593.2 257.1 593.0 258.4"/><path d="M617.0 224.0 C614.4 226.9 605.1 236.4 601.6 241.2 C598.1 246.0 597.0 249.8 595.9 252.7 C594.8 255.6 595.1 257.4 595.0 258.4"/><path d="M645.9 223.5 L632.2 233.5"/><path d="M500.0 266.5 C503.1 266.6 514.4 266.7 518.8 267.0 C523.2 267.3 521.3 267.8 526.5 268.4 C531.7 269.0 544.2 270.9 550.0 270.8 C555.8 270.7 557.7 269.1 561.5 268.0 C565.3 266.9 569.2 265.6 573.0 264.1 C576.8 262.7 580.9 260.2 584.4 259.3 C587.9 258.4 590.8 258.3 594.0 258.8 C597.2 259.3 600.6 260.4 603.5 262.2 C606.4 264.0 609.4 267.8 611.2 269.9 C613.0 272.0 613.6 273.8 614.1 274.6"/><path d="M614.1 274.6 C615.2 272.9 617.7 266.7 620.7 264.1 C623.7 261.6 628.4 260.2 632.2 259.3 C636.0 258.4 640.4 258.4 643.7 258.4 C647.0 258.4 650.8 259.0 652.2 259.1"/><path d="M614.1 274.6 C614.1 276.2 613.6 280.2 613.9 284.0 C614.2 287.8 614.7 293.9 615.8 297.4 C616.9 300.9 617.9 302.7 620.6 305.1 C623.3 307.5 629.4 310.5 632.1 311.8 C634.8 313.1 636.1 312.6 636.9 312.7"/><path d="M616.8 281.1 C617.8 282.2 620.9 285.7 622.5 287.8 C624.1 289.9 625.8 292.6 626.4 293.6"/><path d="M647.4 285.9 C646.4 285.3 643.4 283.6 641.5 282.5 C639.6 281.4 636.8 279.8 635.9 279.2"/><path d="M348.3 217.0 C348.4 216.2 348.2 214.0 348.8 212.5 C349.4 211.0 350.4 209.5 351.6 207.8 C352.8 206.1 354.2 204.1 356.0 202.5 C357.8 200.9 360.2 199.7 362.4 198.4 C364.6 197.2 366.3 196.1 369.0 195.0 C371.7 193.9 374.6 192.8 378.6 191.6 C382.6 190.4 388.0 188.9 392.9 188.0 C397.8 187.1 403.1 186.4 408.2 186.1 C413.3 185.8 418.4 186.0 423.5 186.4 C428.6 186.8 434.4 187.7 438.8 188.4 C443.2 189.1 445.6 189.5 450.0 190.7 C454.4 191.9 459.9 193.7 465.3 195.7 C470.7 197.7 477.3 200.3 482.2 202.8 C487.1 205.3 490.4 207.7 494.5 210.5 C498.6 213.3 503.1 216.5 506.7 219.6 C510.3 222.7 513.5 225.4 515.9 228.8 C518.3 232.2 519.9 237.6 521.2 240.0 C522.5 242.4 522.9 241.3 523.6 243.5 C524.3 245.7 525.6 250.2 525.5 253.1 C525.4 256.0 524.8 258.6 522.7 260.7 C520.6 262.8 516.3 264.5 513.1 265.5 C509.9 266.5 506.1 267.0 503.5 266.5 C500.9 266.0 498.9 264.7 497.5 262.5 C496.1 260.3 495.3 254.7 494.9 253.1"/><path d="M348.3 217.0 C348.2 218.2 347.2 221.7 347.6 224.2 C348.0 226.7 349.0 229.9 350.6 231.8 C352.2 233.7 354.3 234.8 357.5 235.6 C360.7 236.4 365.7 236.1 369.8 236.4 C373.9 236.7 378.4 236.4 382.0 237.2 C385.6 238.0 388.6 239.3 391.2 241.0 C393.8 242.7 396.0 244.8 397.3 247.1 C398.6 249.4 398.9 252.2 398.8 254.8 C398.7 257.4 397.8 259.9 396.5 262.4 C395.2 264.9 392.8 267.7 391.2 270.0 C389.6 272.3 387.4 275.2 386.6 276.2"/><path d="M349.8 216.0 C349.7 217.4 348.8 222.0 349.2 224.5 C349.6 227.0 350.4 229.2 352.0 230.8 C353.6 232.4 356.0 233.3 359.0 234.0 C362.0 234.7 366.0 234.7 370.0 235.0 C374.0 235.3 379.2 235.0 383.0 235.8 C386.8 236.6 389.8 238.0 392.5 239.8 C395.2 241.6 397.7 244.0 399.0 246.5 C400.3 249.0 400.7 252.1 400.5 254.8 C400.3 257.6 399.2 260.3 398.0 263.0 C396.8 265.7 394.5 268.8 393.0 271.0 C391.5 273.2 389.7 275.2 389.0 276.0"/><path d="M350.6 231.8 C352.0 233.1 355.3 237.8 359.0 239.5 C362.7 241.2 368.7 240.8 372.8 241.8 C376.9 242.8 380.9 243.4 383.5 245.6 C386.1 247.8 387.2 251.5 388.1 254.8 C389.0 258.1 389.0 262.4 388.9 265.5 C388.8 268.6 387.6 271.8 387.3 273.1"/><path d="M401.5 238.7 C403.1 237.8 406.8 235.3 411.1 233.5 C415.4 231.7 421.0 229.4 427.3 228.1 C433.6 226.8 442.6 225.8 448.9 225.4 C455.2 225.0 459.7 225.0 465.1 225.4 C470.5 225.8 477.3 226.5 481.4 228.1 C485.5 229.7 487.7 232.0 489.5 234.9 C491.3 237.8 491.3 242.7 492.2 245.7 C493.1 248.7 494.4 251.9 494.9 253.1"/><path d="M408.4 240.8 C409.5 240.7 412.8 240.3 415.0 240.0 C417.2 239.7 418.9 239.8 421.9 238.9 C424.8 238.1 429.1 235.9 432.7 234.9 C436.3 233.9 439.9 232.9 443.5 232.7 C447.1 232.5 451.6 232.9 454.3 233.5 C457.0 234.1 457.0 235.9 459.7 236.2 C462.4 236.5 466.9 235.4 470.5 235.4 C474.1 235.4 478.9 234.9 481.4 236.2 C483.9 237.5 484.5 240.1 485.4 243.0 C486.3 245.9 487.2 251.3 486.8 253.8 C486.4 256.3 483.1 256.2 482.7 257.8 C482.2 259.4 483.9 262.3 484.1 263.2"/><path d="M421.3 241.8 C421.4 242.9 421.0 246.7 422.1 248.6 C423.2 250.5 425.1 252.9 428.2 253.2 C431.3 253.5 436.7 251.1 440.5 250.2 C444.3 249.3 447.6 248.3 451.2 247.9 C454.8 247.5 459.5 248.0 461.9 247.9 C464.2 247.8 463.3 246.9 465.3 247.4 C467.3 247.9 472.3 248.3 473.9 251.2 C475.5 254.1 475.4 261.4 474.9 264.6 C474.4 267.8 471.9 269.0 471.0 270.3 C470.1 271.6 469.4 271.1 469.8 272.2 C470.2 273.3 471.9 275.3 473.6 276.8 C475.3 278.3 478.3 279.1 479.8 281.4 C481.3 283.7 481.8 287.0 482.8 290.6 C483.8 294.2 484.9 298.7 485.9 302.8 C486.9 306.9 488.0 311.1 488.9 315.0 C489.8 318.9 491.1 324.2 491.5 326.0"/><path d="M428.6 267.3 C430.2 265.7 433.8 259.6 438.1 257.8 C442.4 256.0 449.4 256.1 454.3 256.5 C459.2 256.9 464.9 258.2 467.8 260.5 C470.7 262.8 471.2 268.4 471.9 270.0"/><path d="M420.0 284.3 C421.9 283.2 428.2 279.1 431.5 277.6 C434.8 276.1 436.0 275.8 440.0 275.3 C444.0 274.8 451.0 274.0 455.3 274.5 C459.6 275.0 462.7 276.1 466.0 278.3 C469.3 280.5 472.6 284.2 475.2 287.5 C477.8 290.8 479.5 294.6 481.3 298.2 C483.1 301.8 484.4 304.6 485.9 308.9 C487.4 313.2 489.2 319.0 490.5 324.2 C491.8 329.4 492.5 335.7 493.5 340.0 C494.5 344.3 495.6 346.0 496.5 350.0 C497.4 354.0 497.9 358.8 498.8 363.8 C499.8 368.8 500.9 374.5 502.2 379.8 C503.5 385.1 505.9 390.2 506.8 395.9 C507.8 401.6 507.9 408.1 507.9 414.2 C507.9 420.3 507.4 426.8 506.8 432.5 C506.2 438.2 505.1 443.4 504.5 448.6 C503.9 453.8 503.2 461.0 502.9 463.5"/><path d="M340.7 240.0 C342.7 241.0 349.3 243.3 352.9 246.1 C356.5 248.9 360.1 252.5 362.1 256.8 C364.2 261.1 364.7 269.6 365.2 272.1"/><path d="M387.5 278.3 C388.6 277.4 391.9 274.1 394.4 272.6 C396.9 271.1 399.9 270.1 402.4 269.2 C404.9 268.3 407.9 267.5 409.3 267.5 C410.7 267.5 411.0 268.3 411.0 269.2 C411.0 270.1 410.4 271.1 409.3 272.6 C408.2 274.1 406.2 276.4 404.7 278.3 C403.2 280.2 401.4 282.6 400.1 284.1 C398.8 285.6 397.4 286.8 396.7 287.5 C395.9 288.2 395.8 288.0 395.6 288.1"/><path d="M395.6 281.8 C396.3 281.0 398.3 278.4 400.0 276.8 C401.7 275.2 405.5 271.9 406.0 272.0 C406.5 272.1 404.2 275.5 403.0 277.5 C401.8 279.5 399.2 282.9 398.5 284.0"/><path d="M422.9 257.0 C422.3 258.4 421.1 262.7 419.6 265.7 C418.1 268.7 415.8 272.2 413.9 274.9 C412.0 277.6 409.9 279.9 408.2 281.8 C406.5 283.7 404.5 285.1 403.6 286.4 C402.7 287.7 403.1 289.1 403.0 289.6"/><path d="M380.0 278.9 C379.8 279.6 378.9 281.6 378.9 282.9 C378.9 284.1 379.1 285.5 380.0 286.4 C380.9 287.3 382.7 287.9 384.1 288.1 C385.6 288.3 387.6 287.8 388.7 287.5 C389.8 287.2 390.6 286.6 391.0 286.4"/><path d="M391.0 286.4 C390.4 287.2 388.9 289.3 387.5 291.0 C386.1 292.7 384.6 295.6 382.9 296.7 C381.2 297.8 379.3 297.2 377.2 297.8 C375.1 298.4 372.0 298.8 370.3 300.1 C368.6 301.5 367.4 303.8 366.9 305.9 C366.4 308.0 366.6 311.1 367.5 312.8 C368.4 314.5 370.8 315.7 372.6 316.2 C374.4 316.7 377.4 315.7 378.3 315.6"/><path d="M395.6 281.8 C395.0 282.8 393.2 285.6 392.1 287.5 C391.0 289.4 390.0 291.4 388.7 293.3 C387.4 295.2 385.6 297.3 384.1 299.0 C382.6 300.7 380.6 301.9 379.5 303.6 C378.4 305.3 377.8 307.2 377.8 309.3 C377.8 311.4 378.3 314.6 379.5 316.2 C380.7 317.8 383.3 318.9 385.2 319.1 C387.1 319.3 389.5 318.7 391.0 317.3 C392.5 315.9 394.0 312.8 394.4 310.5 C394.8 308.2 394.0 305.5 393.3 303.6 C392.6 301.7 390.7 300.5 390.4 299.0 C390.1 297.5 390.4 295.8 391.5 294.4 C392.6 293.0 395.3 291.2 396.7 290.4 C398.1 289.6 399.5 289.6 400.1 289.5"/><path d="M400.1 289.5 C402.9 289.5 413.5 288.9 416.9 289.7 C420.3 290.4 419.3 292.6 420.5 294.0 C421.7 295.4 422.8 297.4 424.0 298.0 C425.2 298.6 426.8 298.2 428.0 297.3 C429.2 296.4 430.8 294.2 431.3 292.5 C431.9 290.8 432.1 288.7 431.3 287.3 C430.5 285.9 428.4 284.7 426.5 284.4 C424.6 284.1 420.6 285.7 419.8 285.4 C419.0 285.1 420.0 284.0 421.7 282.8 C423.4 281.6 427.9 279.4 430.0 278.2 C432.1 277.0 430.8 276.7 434.1 275.8 C437.4 274.9 447.4 273.4 450.0 272.9"/><path d="M431.3 287.3 C432.2 287.4 435.7 286.4 437.0 288.2 C438.3 289.9 438.4 294.9 438.9 297.8 C439.4 300.7 438.6 303.3 439.9 305.4 C441.2 307.5 446.9 308.9 446.8 310.2 C446.7 311.5 441.7 312.1 439.1 313.0 C436.6 313.9 433.2 314.5 431.5 315.9 C429.8 317.3 429.2 320.3 428.6 321.6 C428.0 322.9 428.6 323.5 427.6 323.5 C426.7 323.5 423.7 322.9 422.9 321.6 C422.1 320.3 422.3 318.3 422.9 315.9 C423.5 313.5 425.4 310.2 426.7 307.3 C428.0 304.4 429.6 301.4 430.5 298.7 C431.4 296.0 431.9 292.3 432.2 291.0"/><path d="M434.3 294.9 C434.8 296.6 437.7 302.2 437.2 305.4 C436.7 308.6 432.8 311.6 431.5 314.0 C430.2 316.4 429.9 318.8 429.6 319.7"/><path d="M427.6 323.5 C427.9 324.8 428.6 327.7 429.6 331.2 C430.6 334.7 431.5 340.8 433.4 344.6 C435.3 348.4 437.8 351.6 441.0 354.1 C444.2 356.7 448.7 358.6 452.5 359.9 C456.3 361.2 461.1 360.4 464.0 361.8 C466.9 363.2 469.5 366.1 470.1 368.3 C470.7 370.5 467.6 372.1 467.8 375.2 C468.0 378.3 469.6 382.5 471.3 386.7 C473.0 390.9 476.0 395.8 478.1 400.4 C480.2 405.0 482.5 409.2 483.9 414.2 C485.2 419.2 485.8 424.8 486.2 430.2 C486.6 435.6 486.5 440.9 486.2 446.3 C485.9 451.7 484.9 459.6 484.6 462.3"/><path d="M507.9 421.1 C508.7 422.1 510.2 426.0 512.5 426.8 C514.8 427.6 517.5 427.2 521.7 425.7 C525.9 424.2 532.4 420.1 537.7 417.6 C543.1 415.1 550.1 412.1 553.8 410.8 C557.5 409.5 557.0 410.9 560.0 410.0 C563.0 409.1 566.9 407.8 571.5 405.5 C576.1 403.2 582.5 400.1 587.5 396.3 C592.5 392.5 597.5 387.6 601.3 382.6 C605.1 377.6 608.5 371.6 610.5 366.5 C612.5 361.4 613.1 354.4 613.6 352.0"/><path d="M511.1 335.0 C510.8 334.5 510.4 333.9 509.0 332.0 C507.6 330.1 504.3 326.8 502.7 323.6 C501.1 320.5 500.0 316.6 499.6 313.1 C499.2 309.6 499.7 305.1 500.6 302.6 C501.5 300.2 503.4 299.4 504.8 298.4 C506.2 297.3 507.6 297.8 509.0 296.3 C510.4 294.8 510.8 291.4 512.9 289.3 C515.0 287.2 517.8 284.8 521.6 283.6 C525.4 282.4 530.6 282.2 535.9 282.2 C541.1 282.2 548.8 282.4 553.1 283.6 C557.4 284.8 559.1 288.0 561.9 289.6 C564.7 291.2 567.9 291.9 569.9 293.0 C571.9 294.1 573.3 295.4 573.9 296.5 C574.5 297.6 572.4 299.3 573.3 299.9 C574.2 300.5 577.6 299.3 579.1 299.9 C580.6 300.5 581.5 302.1 582.5 303.3 C583.5 304.5 583.6 305.8 584.8 306.8 C585.9 307.8 588.2 307.8 589.4 309.1 C590.5 310.4 590.4 313.5 591.7 314.8 C593.0 316.1 596.1 315.8 597.4 317.1 C598.7 318.4 598.7 321.3 599.7 322.8 C600.7 324.3 602.1 325.0 603.2 326.3 C604.4 327.6 605.5 329.2 606.6 330.9 C607.7 332.6 609.0 334.2 610.0 336.6 C611.0 339.0 611.7 342.4 612.3 345.0 C612.9 347.6 614.5 350.5 613.4 352.4 C612.3 354.2 606.9 354.2 605.9 356.1 C604.9 358.0 607.8 361.5 607.2 363.6 C606.6 365.7 603.9 367.6 602.2 368.6 C600.5 369.6 598.4 369.2 597.2 369.8 C596.0 370.4 595.8 371.3 594.8 372.3 C593.8 373.3 592.5 374.6 591.0 376.0 C589.5 377.4 587.9 379.8 586.0 381.0 C584.1 382.2 581.4 382.9 579.8 383.5 C578.1 384.1 576.9 384.0 576.1 384.8 C575.3 385.6 575.9 387.5 574.9 388.5 C573.9 389.5 571.6 390.2 569.9 391.0 C568.2 391.8 566.6 392.7 564.9 393.5 C563.2 394.3 562.0 395.2 559.9 396.0 C557.8 396.8 555.0 397.8 552.5 398.4 C550.0 399.0 546.9 400.9 545.0 399.7 C543.1 398.4 542.1 393.6 541.0 390.9 C539.9 388.2 539.3 384.4 538.5 383.4 C537.7 382.4 536.7 383.5 536.0 384.7 C535.3 385.9 535.6 389.1 534.2 390.8 C532.9 392.5 530.4 395.0 527.9 395.0 C525.4 395.0 521.6 392.9 519.5 390.8 C517.4 388.7 516.7 382.8 515.3 382.4 C513.9 382.0 512.9 388.3 511.1 388.7 C509.4 389.1 506.2 386.9 504.8 384.5 C503.4 382.1 502.7 378.2 502.7 374.0 C502.7 369.8 503.4 363.9 504.8 359.3 C506.2 354.8 509.6 349.7 511.1 346.7 C512.6 343.7 515.0 343.6 514.0 341.5 C513.0 339.4 507.4 337.8 504.8 334.1 C502.2 330.5 499.7 323.5 498.1 319.6 C496.5 315.7 495.5 313.6 495.0 310.5 C494.5 307.4 494.5 304.1 495.0 301.3 C495.5 298.5 497.3 296.2 498.1 293.6 C498.9 291.1 499.9 288.6 499.6 286.0 C499.4 283.4 497.9 280.1 496.6 278.3 C495.3 276.5 494.6 275.8 492.0 275.3 C489.4 274.8 483.5 275.7 481.3 275.3 C479.1 274.9 479.0 273.8 479.0 273.0 C479.0 272.2 479.7 271.3 481.3 270.7 C482.9 270.1 487.4 270.2 488.9 269.2 C490.4 268.2 490.9 266.1 490.5 264.6 C490.1 263.2 487.6 260.7 486.5 260.5 C485.4 260.3 484.5 262.8 484.1 263.2"/><path d="M472.3 218.9 C472.3 217.8 465.2 214.6 461.5 212.9 C457.8 211.2 453.8 210.2 450.0 209.0 C446.2 207.8 443.2 206.8 438.8 206.0 C434.4 205.2 428.6 204.7 423.5 204.5 C418.4 204.3 413.3 204.2 408.2 204.8 C403.1 205.4 397.5 206.8 392.9 208.3 C388.3 209.8 383.6 211.7 380.7 213.6 C377.8 215.5 376.2 217.8 375.4 219.8 C374.6 221.9 374.7 224.1 376.1 225.9 C377.5 227.7 381.0 229.0 383.8 230.5 C386.6 232.0 389.9 233.6 392.9 235.0 C395.8 236.4 398.9 239.0 401.5 238.7 C404.1 238.4 405.1 235.7 408.3 233.3 C411.5 230.9 416.0 226.6 420.6 224.2 C425.2 221.8 430.8 219.9 435.9 218.8 C441.0 217.7 446.9 217.4 451.2 217.5 C455.5 217.6 458.0 219.4 461.5 219.6 C465.0 219.8 472.3 220.0 472.3 218.9Z"/><path d="M438.0 240.9 C438.0 239.4 438.9 237.3 440.5 236.6 C442.1 235.9 445.9 235.9 447.5 236.6 C449.1 237.3 450.0 239.4 450.0 240.9 C450.0 242.4 449.1 244.6 447.5 245.3 C445.9 246.0 442.1 246.0 440.5 245.3 C438.9 244.6 438.0 242.4 438.0 240.9Z"/></g><g fill="none" stroke="#222" stroke-width="2.6" stroke-linecap="round"><path d="M525.0 283.7 L524.8 284.6 L524.8 285.4 L525.0 286.2 L525.4 287.0 L525.9 287.7 L526.4 288.5 L526.7 289.3 L526.8 290.1 L526.8 290.9 L526.6 291.8 L526.6 292.8 L526.8 293.6 L527.3 294.4 L527.9 295.1 L528.6 295.8 L529.1 296.5 L529.5 297.3 L529.5 298.3 L529.3 299.2 L529.2 300.1 L529.2 301.0 L529.5 301.8 L529.9 302.5 L530.5 303.3 L531.0 304.1 L531.2 304.9"/><path d="M526.2 289.4 L528.4 287.3"/><path d="M529.0 297.5 L526.1 296.8"/><path d="M531.9 283.2 L531.9 284.1 L532.0 284.9 L532.3 285.8 L532.7 286.6 L532.9 287.5"/><path d="M541.1 283.6 L541.2 284.5 L541.4 285.4 L541.5 286.3 L541.5 287.1 L541.2 287.9 L540.7 288.7 L540.2 289.5 L540.1 290.4 L540.2 291.2 L540.5 292.0 L541.0 292.8 L541.5 293.5 L541.9 294.3 L542.1 295.3 L541.6 296.1 L540.9 296.8 L540.3 297.5 L539.8 298.3 L539.5 299.1 L539.5 300.0 L539.5 300.9 L539.9 301.6 L540.1 302.4 L540.0 303.3 L539.9 304.1 L539.6 305.0 L539.5 305.8 L539.5 306.6 L539.8 307.4 L540.2 308.2 L540.7 309.0 L540.9 309.9 L540.9 310.7 L540.7 311.6 L540.4 312.4 L540.1 313.2 L539.9 314.1 L539.9 314.9 L540.2 315.8"/><path d="M540.4 289.5 L543.0 287.9"/><path d="M540.3 298.5 L538.5 296.0"/><path d="M540.1 306.6 L542.4 304.7"/><path d="M536.9 291.0 L537.1 291.9 L537.2 292.8 L537.1 293.7 L536.7 294.5 L536.2 295.3 L535.7 296.1 L535.5 297.1 L535.9 298.0 L536.5 298.7 L537.2 299.4 L537.8 300.1 L538.2 301.0 L538.3 301.9"/><path d="M536.0 297.0 L533.2 295.7"/><path d="M548.9 284.3 L549.1 285.2 L549.1 286.1 L548.9 287.1 L548.6 288.0 L548.5 289.0"/><path d="M509.8 295.9 L510.4 296.5 L510.8 297.3 L511.3 298.1 L511.8 298.7 L512.5 299.2 L513.3 299.5 L514.2 299.8 L514.8 300.5 L515.2 301.3 L515.3 302.2 L515.3 303.2"/><path d="M514.1 299.8 L511.1 300.0"/><path d="M514.1 299.7 L514.9 300.2 L515.8 300.7 L516.7 301.0 L517.6 300.9 L518.7 300.8 L519.4 301.4 L520.0 302.0 L520.4 302.7 L520.6 303.6 L520.8 304.4 L521.0 305.3 L521.4 306.0 L521.9 306.7 L522.6 307.2 L523.4 307.7"/><path d="M519.1 301.6 L520.4 298.8"/><path d="M502.3 302.4 L502.8 303.0 L503.4 303.6 L504.1 304.0 L504.9 304.3 L505.7 304.7 L506.4 305.1 L506.9 305.7 L507.3 306.5 L507.7 307.3 L508.0 308.1 L508.6 308.7 L509.3 309.2 L510.1 309.5 L511.0 309.7 L511.8 310.0 L512.6 310.4 L513.3 311.0 L513.4 312.0 L513.5 312.9 L513.6 313.8 L513.9 314.5 L514.5 315.2 L515.1 315.8 L515.9 316.3 L516.6 316.8 L517.1 317.5 L517.4 318.2 L517.7 319.1 L517.9 319.9 L518.2 320.7 L518.8 321.4 L519.5 321.8 L520.4 322.1 L521.2 322.5 L521.9 322.9 L522.5 323.6 L522.6 324.7 L522.6 325.6 L522.5 326.6 L522.7 327.5 L523.1 328.3 L523.7 329.0"/><path d="M506.6 306.1 L503.6 306.8"/><path d="M513.3 312.1 L514.9 309.5"/><path d="M518.1 319.7 L515.1 320.0"/><path d="M523.2 327.3 L525.2 325.0"/><path d="M557.1 291.5 L556.8 292.3 L556.7 293.2 L556.5 294.0 L556.3 294.9 L555.9 295.6 L555.3 296.2 L554.5 296.7 L553.8 297.2 L553.2 297.8 L552.8 298.5 L552.5 299.3 L552.4 300.2 L552.2 301.1 L551.8 301.9 L551.2 302.5 L550.5 302.9 L549.7 303.3 L548.9 303.8 L548.3 304.3 L547.8 305.0 L547.5 305.7 L547.2 306.6 L546.9 307.4 L546.5 308.1 L545.9 308.7 L545.1 309.1"/><path d="M554.5 296.7 L557.6 296.8"/><path d="M549.2 304.0 L548.3 301.1"/><path d="M557.9 308.8 L557.4 309.6 L556.8 310.3 L556.2 310.9 L555.4 311.3 L554.6 311.5 L553.7 311.7 L552.8 311.9 L552.1 312.4 L551.5 313.0 L551.0 313.7 L550.5 314.5 L549.9 315.2 L549.1 315.5 L548.2 315.7 L547.3 315.8 L546.4 315.9 L545.5 316.1 L544.8 316.6 L544.2 317.2 L543.6 317.9 L542.9 318.5"/><path d="M553.1 312.3 L552.9 309.3"/><path d="M545.8 316.6 L548.3 318.2"/><path d="M558.2 316.1 L557.6 316.7 L556.8 317.2 L556.0 317.4 L555.1 317.6 L554.2 317.8 L553.4 318.1 L552.7 318.6 L552.1 319.3 L551.6 320.1 L551.1 320.8 L550.5 321.4 L549.8 321.8 L549.0 322.2 L548.1 322.5 L547.3 322.9 L546.7 323.5 L546.2 324.2 L545.8 325.0 L545.4 325.8 L544.9 326.5 L544.3 327.1 L543.5 327.5"/><path d="M553.0 319.0 L555.7 320.4"/><path d="M546.4 324.4 L545.8 321.5"/><path d="M558.2 327.8 L557.3 328.1 L556.4 328.1 L555.4 328.2 L554.4 328.3 L553.6 328.8 L552.9 329.4 L552.4 330.2 L552.0 330.9 L551.4 331.5 L550.7 331.9 L549.9 332.2 L549.1 332.4 L548.3 332.6 L547.5 333.0 L546.8 333.5 L546.3 334.2 L545.7 334.9 L545.1 335.6 L544.4 336.1 L543.6 336.4 L542.7 336.5"/><path d="M553.0 329.6 L553.0 326.6"/><path d="M545.6 334.8 L548.3 336.2"/><path d="M574.2 296.5 L573.8 297.3 L573.4 298.1 L573.1 298.9 L573.1 299.7 L573.2 300.5 L573.5 301.4 L573.7 302.2 L573.8 303.0 L573.8 303.8 L573.5 304.6 L573.2 305.5 L572.9 306.3 L572.8 307.1 L572.8 308.0 L573.5 308.8 L574.1 309.6 L574.7 310.4 L575.0 311.2"/><path d="M573.3 302.2 L576.0 300.8"/><path d="M572.1 303.1 L571.3 303.1 L570.5 303.2 L569.7 303.6 L569.0 304.2 L568.3 304.7 L567.5 305.2 L566.7 305.4 L565.9 305.4 L565.0 305.4 L564.1 305.3 L563.2 305.6 L562.5 306.1 L561.9 306.7 L561.4 307.4 L560.8 308.1 L560.1 308.7 L559.4 309.0 L558.5 309.2 L557.5 309.2 L556.5 309.2 L555.7 309.4 L554.9 309.9"/><path d="M566.6 304.9 L567.4 302.0"/><path d="M558.4 309.1 L560.9 310.8"/><path d="M585.8 313.2 L585.0 313.6 L584.3 314.2 L583.6 314.9 L582.9 315.5 L582.2 315.9 L581.3 316.1 L580.3 316.1 L579.4 316.1 L578.5 316.3 L577.6 316.7 L577.2 317.5 L576.8 318.3 L576.5 319.1 L576.0 319.8 L575.4 320.3 L574.6 320.7 L573.8 321.0 L573.1 321.4 L572.4 321.8 L571.8 322.5 L571.5 323.3 L571.3 324.1 L571.0 325.0 L570.6 325.7 L570.0 326.2 L569.2 326.7 L568.5 327.1 L567.7 327.5 L567.1 328.1 L566.7 328.8 L566.4 329.6 L566.1 330.5 L565.8 331.3 L565.4 332.0 L564.8 332.5 L564.0 333.0 L563.3 333.4 L562.5 333.9 L562.0 334.5 L561.6 335.3"/><path d="M580.3 316.1 L582.8 317.9"/><path d="M573.9 321.1 L573.2 318.1"/><path d="M567.5 328.4 L570.5 328.9"/><path d="M579.7 321.2 L580.5 321.7 L581.2 322.1 L581.9 322.7 L582.4 323.4 L582.7 324.2 L583.0 325.0"/><path d="M594.1 322.9 L593.6 323.6 L592.9 324.2 L592.2 324.5 L591.3 324.8 L590.4 324.9 L589.6 325.2 L588.9 325.6 L588.3 326.2 L587.8 326.9 L587.2 327.6 L586.7 328.3 L586.0 328.7 L585.2 329.0 L584.3 329.2 L583.4 329.3 L582.6 329.6 L581.9 330.1 L581.3 330.7 L580.8 331.5 L580.2 332.2 L579.6 332.8 L578.9 333.1 L578.0 333.4 L577.1 333.5 L576.3 333.8 L575.6 334.1 L574.9 334.7 L574.4 335.4 L573.9 336.1 L573.4 336.8 L572.8 337.3 L572.0 337.7 L571.1 337.9 L570.2 337.9 L569.3 338.0 L568.4 338.3 L567.7 338.8 L567.0 339.4 L566.3 340.1 L565.5 340.5"/><path d="M589.2 326.0 L591.9 327.3"/><path d="M581.4 331.0 L581.4 327.9"/><path d="M573.8 336.0 L576.6 337.2"/><path d="M601.3 327.8 L600.7 328.3 L599.9 328.8 L599.1 329.1 L598.3 329.5 L597.6 329.9 L597.1 330.5 L596.7 331.3 L596.3 332.1 L596.0 332.9 L595.4 333.6 L594.6 334.0 L593.7 334.2 L592.8 334.3 L592.0 334.5 L591.2 334.8 L590.5 335.3 L589.9 336.0 L589.4 336.7 L588.8 337.4 L588.1 337.9 L587.3 338.1 L586.3 338.2 L585.4 338.3 L584.6 338.5 L583.8 338.8 L583.1 339.4 L582.5 340.1 L581.9 340.8 L581.2 341.3 L580.4 341.6 L579.5 341.7 L578.6 341.7 L577.7 341.9 L576.9 342.2 L576.1 342.8 L575.5 343.5 L574.8 344.2 L574.1 344.7 L573.2 345.0 L572.3 345.1"/><path d="M596.8 331.5 L596.1 328.5"/><path d="M589.3 336.5 L591.9 338.0"/><path d="M581.7 340.4 L582.0 337.4"/><path d="M606.8 334.7 L605.9 334.8 L605.0 334.9 L604.2 335.1 L603.4 335.5 L602.8 336.1 L602.2 336.8 L601.7 337.5 L601.0 338.1 L600.3 338.5 L599.5 338.7 L598.6 338.8 L597.7 338.8 L596.9 339.0 L596.1 339.3 L595.4 339.8 L594.8 340.4 L594.1 341.0 L593.4 341.4 L592.6 341.6 L591.8 341.6 L590.9 341.6 L590.0 341.6 L589.2 341.8 L588.5 342.2 L587.8 342.7 L587.2 343.4 L586.5 343.9 L585.8 344.3 L585.0 344.5 L584.1 344.5 L583.2 344.5 L582.3 344.6"/><path d="M601.5 337.2 L604.2 338.7"/><path d="M593.2 340.9 L593.8 337.9"/><path d="M584.8 344.1 L587.2 346.0"/><path d="M568.8 311.3 L567.9 311.4 L567.0 311.7 L566.3 312.1 L565.7 312.8 L565.1 313.5 L564.4 314.1 L563.7 314.5 L562.8 314.8 L561.9 314.8 L561.0 314.9 L560.1 315.1 L559.4 315.5 L558.7 316.1 L558.1 316.8 L557.5 317.5 L556.8 318.0 L556.0 318.3 L555.1 318.4"/><path d="M563.4 314.0 L563.7 311.0"/><path d="M566.1 315.6 L565.5 316.2 L565.1 316.9 L564.7 317.7 L564.4 318.5 L564.0 319.2 L563.4 319.8 L562.7 320.2 L561.9 320.6 L561.1 320.9 L560.4 321.3 L559.8 321.9 L559.5 322.5 L558.7 322.8 L557.8 323.2 L556.8 323.3 L555.9 323.2 L555.0 322.9"/><path d="M562.5 320.0 L565.4 320.7"/><path d="M523.8 349.7 L523.6 350.6 L523.5 351.5 L523.3 352.4 L523.0 353.2 L522.4 353.8 L521.6 354.4 L520.9 355.0 L520.3 355.6 L519.9 356.4 L519.7 357.3 L519.6 358.2 L519.5 359.1 L519.2 359.9 L518.8 360.6 L518.2 361.2 L517.5 361.8 L516.8 362.4 L516.4 363.1 L516.1 363.9 L516.0 364.8 L516.2 365.7 L516.3 366.5 L516.2 367.4 L515.9 368.2 L515.5 369.0 L515.0 369.8 L514.6 370.6 L514.5 371.4 L514.6 372.2 L514.8 373.2 L515.0 374.2 L514.9 375.1 L514.6 375.9 L514.1 376.7 L513.6 377.6 L513.2 378.5 L513.5 379.6 L514.1 380.4 L514.8 381.2 L515.4 382.0"/><path d="M521.2 355.1 L519.7 352.5"/><path d="M517.2 362.6 L520.3 362.4"/><path d="M515.0 371.5 L512.7 369.5"/><path d="M514.3 380.4 L516.3 378.1"/><path d="M536.0 381.0 L535.3 380.4 L534.7 379.8 L534.3 379.1 L534.1 378.2 L534.0 377.3 L533.9 376.5 L533.6 375.7 L533.1 375.0 L532.5 374.4 L531.8 373.8 L531.1 373.2 L530.6 372.5 L530.4 371.7 L530.4 370.8 L530.4 369.9 L530.4 369.1 L530.2 368.3 L529.7 367.5 L529.2 366.9 L528.5 366.2 L528.0 365.6 L527.7 364.8 L527.5 364.0 L527.5 363.1 L527.6 362.2 L527.5 361.3 L527.2 360.5 L526.7 359.7 L526.1 359.0 L525.5 358.3 L525.1 357.5 L524.9 356.7 L524.9 355.8 L525.0 354.8"/><path d="M533.1 375.9 L531.6 378.6"/><path d="M529.3 367.7 L532.3 368.2"/><path d="M526.2 359.0 L524.2 361.3"/><path d="M531.9 371.8 L532.1 371.0 L532.6 370.4 L533.2 369.7 L533.8 369.1 L534.4 368.5 L534.8 367.8 L535.0 367.0 L535.0 366.2 L535.1 365.3 L535.2 364.4 L535.4 363.7 L535.9 363.0 L536.5 362.4 L537.1 361.8 L537.7 361.1 L538.1 360.4 L538.3 359.6 L538.3 358.8 L538.3 357.9 L538.4 357.1 L538.7 356.3 L539.2 355.6 L539.8 355.0 L540.5 354.4 L541.0 353.8 L541.4 353.1 L541.5 352.3 L541.6 351.4 L541.6 350.5 L541.7 349.7"/><path d="M534.6 366.8 L536.3 369.3"/><path d="M538.2 358.7 L535.2 359.1"/><path d="M530.7 367.6 L531.5 367.3 L532.4 367.1 L533.2 366.8 L534.0 366.5 L534.6 365.9 L535.1 365.2 L535.5 364.4 L536.0 363.7 L536.6 363.1 L537.3 362.7 L538.1 362.4 L539.0 362.2 L539.8 361.9 L540.5 361.5 L541.1 360.9 L541.6 360.2 L542.0 359.4 L542.6 358.7 L543.2 358.2"/><path d="M535.6 364.5 L532.8 363.4"/><path d="M533.0 375.9 L533.8 375.7 L534.6 375.3 L535.2 374.8 L535.7 374.1 L536.1 373.4 L536.5 372.6 L537.0 371.9 L537.6 371.3 L538.4 371.0 L539.2 370.7 L540.0 370.4 L540.8 370.0 L541.4 369.5 L541.9 368.8 L542.3 368.0 L542.7 367.2 L543.2 366.5 L543.8 366.0 L544.6 365.7 L545.4 365.4 L546.3 365.1"/><path d="M537.3 372.3 L537.8 375.3"/><path d="M544.1 366.4 L541.3 365.4"/><path d="M535.1 379.4 L535.9 379.3 L536.7 378.9 L537.4 378.4 L538.0 377.8 L538.7 377.3 L539.4 376.9 L540.2 376.7 L541.0 376.7 L541.9 376.8 L542.8 376.8 L543.6 376.6 L544.3 376.3 L545.0 375.8 L545.6 375.2 L546.3 374.6 L547.0 374.3"/><path d="M540.3 377.2 L538.0 375.2"/><path d="M529.5 366.0 L529.3 365.2 L528.9 364.4 L528.5 363.6 L528.2 362.8 L528.2 362.0 L528.3 361.1"/><path d="M544.6 382.2 L544.7 383.0 L544.7 383.9 L544.5 384.7 L544.2 385.5 L543.7 386.2 L543.1 386.9 L542.6 387.6 L542.4 388.4 L542.3 389.2 L542.4 390.1 L542.5 391.0"/><path d="M543.1 387.7 L546.0 387.0"/><path d="M551.3 382.3 L551.2 383.1 L550.9 383.9 L550.5 384.7 L549.9 385.4 L549.4 386.1 L549.1 386.9 L548.9 387.7 L549.0 388.6 L549.1 389.5 L549.2 390.4 L549.0 391.2 L548.7 392.0 L548.2 392.7 L547.6 393.4 L547.2 394.2 L546.9 395.0 L546.9 395.8"/><path d="M549.4 387.8 L547.3 385.7"/><path d="M555.2 384.6 L555.3 385.4 L555.2 386.3 L555.1 387.1 L555.1 388.0 L555.3 388.8 L555.7 389.5 L556.2 390.2 L556.7 390.9 L557.2 391.7 L557.4 392.5 L557.4 393.3"/><path d="M556.2 390.2 L558.3 388.0"/><path d="M547.7 347.2 L548.0 348.1 L548.4 349.0 L549.0 349.7 L549.7 350.2 L550.6 350.6 L551.5 350.9 L552.2 351.4 L552.5 351.9 L553.1 351.7 L554.1 351.5 L555.0 351.3 L555.8 350.9 L556.4 350.2"/><path d="M551.9 351.8 L548.9 352.5"/><path d="M549.9 360.2 L550.7 360.7 L551.5 360.9 L552.4 361.0 L553.3 360.9 L554.2 360.9 L555.1 361.0 L555.9 361.4 L556.6 362.0 L557.3 362.6 L557.8 363.3 L558.5 363.9 L559.3 364.3 L560.2 364.5 L561.1 364.8 L561.9 365.2 L562.6 365.9 L563.1 366.6 L563.6 367.5 L564.1 368.2 L564.7 368.8 L565.6 369.2 L566.5 369.5 L567.4 369.8 L568.2 370.2 L568.8 370.8 L569.3 371.6 L569.8 372.5 L570.3 373.2 L570.9 373.8 L571.8 374.2 L572.7 374.5 L573.6 374.8 L574.4 375.2 L575.0 375.8 L575.5 376.6 L576.0 377.5"/><path d="M555.8 361.8 L555.1 358.9"/><path d="M563.0 366.8 L560.2 367.9"/><path d="M569.9 372.3 L570.3 369.3"/><path d="M553.5 369.1 L554.3 369.4 L555.1 369.5 L556.0 369.5 L556.9 369.6 L557.7 370.0 L558.4 370.5 L559.0 371.1 L559.6 371.8 L560.2 372.4 L560.9 372.8 L561.7 373.0 L562.6 373.1 L563.4 373.3 L564.2 373.5 L564.9 373.9 L565.5 374.5 L566.0 375.2 L566.5 375.9 L567.1 376.4"/><path d="M559.0 371.2 L556.4 372.8"/><path d="M559.8 378.8 L560.7 378.6 L561.7 378.5 L562.5 378.6 L563.3 378.9 L564.1 379.4 L564.9 379.9 L565.6 380.4 L566.4 380.7 L567.3 380.7 L568.2 380.6 L569.1 380.5 L570.0 380.5"/><path d="M565.7 380.0 L564.9 377.1"/><path d="M555.2 375.9 L555.9 376.4 L556.4 377.0 L556.7 377.8 L557.0 378.7 L557.1 379.6 L557.4 380.4 L557.9 381.0 L558.5 381.6 L559.3 382.1 L560.0 382.6 L560.7 383.1 L561.1 383.8 L561.4 384.6 L561.8 385.5 L562.1 386.3 L562.6 387.0 L563.3 387.6 L564.2 388.0 L565.0 388.3 L565.8 388.7 L566.5 389.3"/><path d="M558.3 380.7 L555.3 381.0"/><path d="M564.3 387.9 L565.0 384.9"/><path d="M562.9 347.2 L563.1 348.0 L563.2 348.9 L563.1 349.8 L563.1 350.6 L563.3 351.4 L563.7 352.2 L564.2 352.8 L564.8 353.5 L565.4 354.2 L565.8 354.9 L565.9 355.7 L565.9 356.6 L565.9 357.5 L566.0 358.4 L566.3 359.2 L566.8 359.9 L567.5 360.6 L568.1 361.2 L568.7 361.9 L569.0 362.7 L569.1 363.6 L569.1 364.6 L569.2 365.5 L569.4 366.3 L569.9 367.0 L570.6 367.6 L571.3 368.2 L572.0 368.8 L572.5 369.5 L572.7 370.3 L572.9 371.1 L573.0 372.0 L573.2 372.9 L573.6 373.6 L574.2 374.2 L574.9 374.8"/><path d="M564.4 352.8 L566.3 350.4"/><path d="M567.8 361.4 L564.8 361.0"/><path d="M571.6 369.0 L573.0 366.4"/><path d="M566.4 352.2 L566.6 353.1 L566.8 354.0 L567.1 354.8 L567.6 355.5 L568.2 356.1 L569.0 356.6 L569.7 357.1 L570.3 357.7 L570.7 358.4 L571.0 359.3 L571.1 360.2 L571.4 361.1 L571.7 361.8 L572.3 362.4 L573.0 363.0 L573.8 363.5 L574.5 364.0 L575.0 364.6 L575.3 365.4 L575.6 366.2 L575.8 367.1 L576.0 367.9 L576.5 368.6 L577.1 369.1 L577.9 369.6 L578.6 370.1 L579.3 370.7 L579.7 371.3 L580.0 372.1"/><path d="M569.4 357.3 L566.4 357.5"/><path d="M574.6 364.9 L575.8 362.2"/><path d="M573.5 350.0 L573.9 350.8 L574.4 351.4 L575.0 351.9 L575.8 352.3 L576.6 352.7 L577.4 353.0 L578.0 353.6 L578.5 354.3 L578.9 355.0 L579.2 355.9 L579.6 356.6 L580.2 357.2 L580.9 357.7 L581.7 358.1 L582.5 358.4 L583.2 358.7 L583.9 359.2 L584.4 359.9 L584.8 360.6 L585.2 361.4 L585.7 362.1 L586.3 362.6 L587.1 363.0 L587.9 363.3 L588.8 363.5 L589.5 363.9 L590.1 364.4 L590.7 364.9 L591.3 365.6 L591.9 366.3 L592.5 366.8 L593.3 367.1 L594.1 367.3 L595.0 367.4 L595.9 367.5 L596.7 367.7 L597.4 368.2"/><path d="M577.7 354.0 L578.4 351.0"/><path d="M584.2 360.2 L581.3 361.2"/><path d="M591.3 365.6 L591.1 362.5"/><path d="M572.3 345.5 L573.1 345.6 L573.9 345.6 L574.8 345.4 L575.7 345.2 L576.5 345.2 L577.3 345.4 L578.0 345.7 L578.8 346.2 L579.5 346.6 L580.3 346.9 L581.1 347.0 L582.0 346.9 L582.8 346.7 L583.7 346.6 L584.5 346.6 L585.3 346.8 L586.1 347.2 L586.7 347.9 L587.4 348.5 L588.2 348.9 L589.0 349.2 L590.0 349.2 L590.9 349.2 L591.8 349.3 L592.6 349.7 L593.3 350.2 L594.0 350.9 L594.7 351.6 L595.4 352.0 L596.3 352.2 L597.2 352.2 L598.2 352.1 L599.1 352.1 L599.9 352.4 L600.7 352.8 L601.4 353.4 L602.1 354.0"/><path d="M578.0 346.0 L576.0 348.3"/><path d="M586.8 347.7 L586.4 344.7"/><path d="M595.6 351.5 L593.3 353.4"/><path d="M584.4 351.3 L584.9 352.0 L585.5 352.7 L586.0 353.4 L586.2 354.2 L586.3 355.1 L586.2 355.9 L586.1 356.8 L586.1 357.7 L586.3 358.5 L586.7 359.2 L587.3 359.9"/><path d="M586.4 356.7 L588.5 354.5"/><path d="M579.9 358.5 L580.6 359.0 L581.2 359.6 L581.7 360.3 L582.0 361.1 L582.2 362.0 L582.4 362.9 L582.9 363.6 L583.5 364.2 L584.2 364.7 L585.0 365.1 L585.7 365.6 L586.2 366.3 L586.6 367.0 L586.8 367.9 L587.0 368.7 L587.0 369.6 L587.1 370.5 L587.6 371.3 L588.1 372.1 L588.6 372.9 L588.9 373.8 L588.9 374.7"/><path d="M583.3 363.3 L580.3 363.6"/><path d="M587.8 371.3 L590.1 369.2"/><path d="M566.0 339.5 L566.8 339.3 L567.6 339.3 L568.5 339.4 L569.4 339.6 L570.2 339.6 L571.0 339.4 L571.8 339.1 L572.5 338.6 L573.2 338.1 L574.0 337.7 L574.8 337.5 L575.6 337.6 L576.5 337.7 L577.4 337.9"/><path d="M571.7 338.8 L569.6 336.6"/><path d="M586.0 339.5 L586.8 339.8 L587.7 340.2 L588.5 340.5 L589.3 340.5 L590.2 340.4 L591.0 340.1 L591.8 339.8 L592.7 339.5 L593.5 339.5 L594.3 339.6 L595.2 340.0 L596.0 340.3 L596.8 340.5 L597.7 340.5 L598.5 340.3 L599.3 340.2 L600.2 340.2 L601.1 340.3 L601.9 340.6 L602.6 341.1 L603.3 341.7 L604.0 342.3 L604.7 342.6 L605.6 342.8 L606.5 342.8 L607.4 342.7 L608.3 342.7 L609.1 342.9 L609.8 343.3"/><path d="M591.8 340.0 L590.3 342.6"/><path d="M600.9 340.8 L600.2 337.8"/></g><g fill="none" stroke="#fff" stroke-width="1.1" stroke-linecap="round"><path d="M525.0 283.7 L524.8 284.6 L524.8 285.4 L525.0 286.2 L525.4 287.0 L525.9 287.7 L526.4 288.5 L526.7 289.3 L526.8 290.1 L526.8 290.9 L526.6 291.8 L526.6 292.8 L526.8 293.6 L527.3 294.4 L527.9 295.1 L528.6 295.8 L529.1 296.5 L529.5 297.3 L529.5 298.3 L529.3 299.2 L529.2 300.1 L529.2 301.0 L529.5 301.8 L529.9 302.5 L530.5 303.3 L531.0 304.1 L531.2 304.9"/><path d="M526.2 289.4 L528.4 287.3"/><path d="M529.0 297.5 L526.1 296.8"/><path d="M531.9 283.2 L531.9 284.1 L532.0 284.9 L532.3 285.8 L532.7 286.6 L532.9 287.5"/><path d="M541.1 283.6 L541.2 284.5 L541.4 285.4 L541.5 286.3 L541.5 287.1 L541.2 287.9 L540.7 288.7 L540.2 289.5 L540.1 290.4 L540.2 291.2 L540.5 292.0 L541.0 292.8 L541.5 293.5 L541.9 294.3 L542.1 295.3 L541.6 296.1 L540.9 296.8 L540.3 297.5 L539.8 298.3 L539.5 299.1 L539.5 300.0 L539.5 300.9 L539.9 301.6 L540.1 302.4 L540.0 303.3 L539.9 304.1 L539.6 305.0 L539.5 305.8 L539.5 306.6 L539.8 307.4 L540.2 308.2 L540.7 309.0 L540.9 309.9 L540.9 310.7 L540.7 311.6 L540.4 312.4 L540.1 313.2 L539.9 314.1 L539.9 314.9 L540.2 315.8"/><path d="M540.4 289.5 L543.0 287.9"/><path d="M540.3 298.5 L538.5 296.0"/><path d="M540.1 306.6 L542.4 304.7"/><path d="M536.9 291.0 L537.1 291.9 L537.2 292.8 L537.1 293.7 L536.7 294.5 L536.2 295.3 L535.7 296.1 L535.5 297.1 L535.9 298.0 L536.5 298.7 L537.2 299.4 L537.8 300.1 L538.2 301.0 L538.3 301.9"/><path d="M536.0 297.0 L533.2 295.7"/><path d="M548.9 284.3 L549.1 285.2 L549.1 286.1 L548.9 287.1 L548.6 288.0 L548.5 289.0"/><path d="M509.8 295.9 L510.4 296.5 L510.8 297.3 L511.3 298.1 L511.8 298.7 L512.5 299.2 L513.3 299.5 L514.2 299.8 L514.8 300.5 L515.2 301.3 L515.3 302.2 L515.3 303.2"/><path d="M514.1 299.8 L511.1 300.0"/><path d="M514.1 299.7 L514.9 300.2 L515.8 300.7 L516.7 301.0 L517.6 300.9 L518.7 300.8 L519.4 301.4 L520.0 302.0 L520.4 302.7 L520.6 303.6 L520.8 304.4 L521.0 305.3 L521.4 306.0 L521.9 306.7 L522.6 307.2 L523.4 307.7"/><path d="M519.1 301.6 L520.4 298.8"/><path d="M502.3 302.4 L502.8 303.0 L503.4 303.6 L504.1 304.0 L504.9 304.3 L505.7 304.7 L506.4 305.1 L506.9 305.7 L507.3 306.5 L507.7 307.3 L508.0 308.1 L508.6 308.7 L509.3 309.2 L510.1 309.5 L511.0 309.7 L511.8 310.0 L512.6 310.4 L513.3 311.0 L513.4 312.0 L513.5 312.9 L513.6 313.8 L513.9 314.5 L514.5 315.2 L515.1 315.8 L515.9 316.3 L516.6 316.8 L517.1 317.5 L517.4 318.2 L517.7 319.1 L517.9 319.9 L518.2 320.7 L518.8 321.4 L519.5 321.8 L520.4 322.1 L521.2 322.5 L521.9 322.9 L522.5 323.6 L522.6 324.7 L522.6 325.6 L522.5 326.6 L522.7 327.5 L523.1 328.3 L523.7 329.0"/><path d="M506.6 306.1 L503.6 306.8"/><path d="M513.3 312.1 L514.9 309.5"/><path d="M518.1 319.7 L515.1 320.0"/><path d="M523.2 327.3 L525.2 325.0"/><path d="M557.1 291.5 L556.8 292.3 L556.7 293.2 L556.5 294.0 L556.3 294.9 L555.9 295.6 L555.3 296.2 L554.5 296.7 L553.8 297.2 L553.2 297.8 L552.8 298.5 L552.5 299.3 L552.4 300.2 L552.2 301.1 L551.8 301.9 L551.2 302.5 L550.5 302.9 L549.7 303.3 L548.9 303.8 L548.3 304.3 L547.8 305.0 L547.5 305.7 L547.2 306.6 L546.9 307.4 L546.5 308.1 L545.9 308.7 L545.1 309.1"/><path d="M554.5 296.7 L557.6 296.8"/><path d="M549.2 304.0 L548.3 301.1"/><path d="M557.9 308.8 L557.4 309.6 L556.8 310.3 L556.2 310.9 L555.4 311.3 L554.6 311.5 L553.7 311.7 L552.8 311.9 L552.1 312.4 L551.5 313.0 L551.0 313.7 L550.5 314.5 L549.9 315.2 L549.1 315.5 L548.2 315.7 L547.3 315.8 L546.4 315.9 L545.5 316.1 L544.8 316.6 L544.2 317.2 L543.6 317.9 L542.9 318.5"/><path d="M553.1 312.3 L552.9 309.3"/><path d="M545.8 316.6 L548.3 318.2"/><path d="M558.2 316.1 L557.6 316.7 L556.8 317.2 L556.0 317.4 L555.1 317.6 L554.2 317.8 L553.4 318.1 L552.7 318.6 L552.1 319.3 L551.6 320.1 L551.1 320.8 L550.5 321.4 L549.8 321.8 L549.0 322.2 L548.1 322.5 L547.3 322.9 L546.7 323.5 L546.2 324.2 L545.8 325.0 L545.4 325.8 L544.9 326.5 L544.3 327.1 L543.5 327.5"/><path d="M553.0 319.0 L555.7 320.4"/><path d="M546.4 324.4 L545.8 321.5"/><path d="M558.2 327.8 L557.3 328.1 L556.4 328.1 L555.4 328.2 L554.4 328.3 L553.6 328.8 L552.9 329.4 L552.4 330.2 L552.0 330.9 L551.4 331.5 L550.7 331.9 L549.9 332.2 L549.1 332.4 L548.3 332.6 L547.5 333.0 L546.8 333.5 L546.3 334.2 L545.7 334.9 L545.1 335.6 L544.4 336.1 L543.6 336.4 L542.7 336.5"/><path d="M553.0 329.6 L553.0 326.6"/><path d="M545.6 334.8 L548.3 336.2"/><path d="M574.2 296.5 L573.8 297.3 L573.4 298.1 L573.1 298.9 L573.1 299.7 L573.2 300.5 L573.5 301.4 L573.7 302.2 L573.8 303.0 L573.8 303.8 L573.5 304.6 L573.2 305.5 L572.9 306.3 L572.8 307.1 L572.8 308.0 L573.5 308.8 L574.1 309.6 L574.7 310.4 L575.0 311.2"/><path d="M573.3 302.2 L576.0 300.8"/><path d="M572.1 303.1 L571.3 303.1 L570.5 303.2 L569.7 303.6 L569.0 304.2 L568.3 304.7 L567.5 305.2 L566.7 305.4 L565.9 305.4 L565.0 305.4 L564.1 305.3 L563.2 305.6 L562.5 306.1 L561.9 306.7 L561.4 307.4 L560.8 308.1 L560.1 308.7 L559.4 309.0 L558.5 309.2 L557.5 309.2 L556.5 309.2 L555.7 309.4 L554.9 309.9"/><path d="M566.6 304.9 L567.4 302.0"/><path d="M558.4 309.1 L560.9 310.8"/><path d="M585.8 313.2 L585.0 313.6 L584.3 314.2 L583.6 314.9 L582.9 315.5 L582.2 315.9 L581.3 316.1 L580.3 316.1 L579.4 316.1 L578.5 316.3 L577.6 316.7 L577.2 317.5 L576.8 318.3 L576.5 319.1 L576.0 319.8 L575.4 320.3 L574.6 320.7 L573.8 321.0 L573.1 321.4 L572.4 321.8 L571.8 322.5 L571.5 323.3 L571.3 324.1 L571.0 325.0 L570.6 325.7 L570.0 326.2 L569.2 326.7 L568.5 327.1 L567.7 327.5 L567.1 328.1 L566.7 328.8 L566.4 329.6 L566.1 330.5 L565.8 331.3 L565.4 332.0 L564.8 332.5 L564.0 333.0 L563.3 333.4 L562.5 333.9 L562.0 334.5 L561.6 335.3"/><path d="M580.3 316.1 L582.8 317.9"/><path d="M573.9 321.1 L573.2 318.1"/><path d="M567.5 328.4 L570.5 328.9"/><path d="M579.7 321.2 L580.5 321.7 L581.2 322.1 L581.9 322.7 L582.4 323.4 L582.7 324.2 L583.0 325.0"/><path d="M594.1 322.9 L593.6 323.6 L592.9 324.2 L592.2 324.5 L591.3 324.8 L590.4 324.9 L589.6 325.2 L588.9 325.6 L588.3 326.2 L587.8 326.9 L587.2 327.6 L586.7 328.3 L586.0 328.7 L585.2 329.0 L584.3 329.2 L583.4 329.3 L582.6 329.6 L581.9 330.1 L581.3 330.7 L580.8 331.5 L580.2 332.2 L579.6 332.8 L578.9 333.1 L578.0 333.4 L577.1 333.5 L576.3 333.8 L575.6 334.1 L574.9 334.7 L574.4 335.4 L573.9 336.1 L573.4 336.8 L572.8 337.3 L572.0 337.7 L571.1 337.9 L570.2 337.9 L569.3 338.0 L568.4 338.3 L567.7 338.8 L567.0 339.4 L566.3 340.1 L565.5 340.5"/><path d="M589.2 326.0 L591.9 327.3"/><path d="M581.4 331.0 L581.4 327.9"/><path d="M573.8 336.0 L576.6 337.2"/><path d="M601.3 327.8 L600.7 328.3 L599.9 328.8 L599.1 329.1 L598.3 329.5 L597.6 329.9 L597.1 330.5 L596.7 331.3 L596.3 332.1 L596.0 332.9 L595.4 333.6 L594.6 334.0 L593.7 334.2 L592.8 334.3 L592.0 334.5 L591.2 334.8 L590.5 335.3 L589.9 336.0 L589.4 336.7 L588.8 337.4 L588.1 337.9 L587.3 338.1 L586.3 338.2 L585.4 338.3 L584.6 338.5 L583.8 338.8 L583.1 339.4 L582.5 340.1 L581.9 340.8 L581.2 341.3 L580.4 341.6 L579.5 341.7 L578.6 341.7 L577.7 341.9 L576.9 342.2 L576.1 342.8 L575.5 343.5 L574.8 344.2 L574.1 344.7 L573.2 345.0 L572.3 345.1"/><path d="M596.8 331.5 L596.1 328.5"/><path d="M589.3 336.5 L591.9 338.0"/><path d="M581.7 340.4 L582.0 337.4"/><path d="M606.8 334.7 L605.9 334.8 L605.0 334.9 L604.2 335.1 L603.4 335.5 L602.8 336.1 L602.2 336.8 L601.7 337.5 L601.0 338.1 L600.3 338.5 L599.5 338.7 L598.6 338.8 L597.7 338.8 L596.9 339.0 L596.1 339.3 L595.4 339.8 L594.8 340.4 L594.1 341.0 L593.4 341.4 L592.6 341.6 L591.8 341.6 L590.9 341.6 L590.0 341.6 L589.2 341.8 L588.5 342.2 L587.8 342.7 L587.2 343.4 L586.5 343.9 L585.8 344.3 L585.0 344.5 L584.1 344.5 L583.2 344.5 L582.3 344.6"/><path d="M601.5 337.2 L604.2 338.7"/><path d="M593.2 340.9 L593.8 337.9"/><path d="M584.8 344.1 L587.2 346.0"/><path d="M568.8 311.3 L567.9 311.4 L567.0 311.7 L566.3 312.1 L565.7 312.8 L565.1 313.5 L564.4 314.1 L563.7 314.5 L562.8 314.8 L561.9 314.8 L561.0 314.9 L560.1 315.1 L559.4 315.5 L558.7 316.1 L558.1 316.8 L557.5 317.5 L556.8 318.0 L556.0 318.3 L555.1 318.4"/><path d="M563.4 314.0 L563.7 311.0"/><path d="M566.1 315.6 L565.5 316.2 L565.1 316.9 L564.7 317.7 L564.4 318.5 L564.0 319.2 L563.4 319.8 L562.7 320.2 L561.9 320.6 L561.1 320.9 L560.4 321.3 L559.8 321.9 L559.5 322.5 L558.7 322.8 L557.8 323.2 L556.8 323.3 L555.9 323.2 L555.0 322.9"/><path d="M562.5 320.0 L565.4 320.7"/><path d="M523.8 349.7 L523.6 350.6 L523.5 351.5 L523.3 352.4 L523.0 353.2 L522.4 353.8 L521.6 354.4 L520.9 355.0 L520.3 355.6 L519.9 356.4 L519.7 357.3 L519.6 358.2 L519.5 359.1 L519.2 359.9 L518.8 360.6 L518.2 361.2 L517.5 361.8 L516.8 362.4 L516.4 363.1 L516.1 363.9 L516.0 364.8 L516.2 365.7 L516.3 366.5 L516.2 367.4 L515.9 368.2 L515.5 369.0 L515.0 369.8 L514.6 370.6 L514.5 371.4 L514.6 372.2 L514.8 373.2 L515.0 374.2 L514.9 375.1 L514.6 375.9 L514.1 376.7 L513.6 377.6 L513.2 378.5 L513.5 379.6 L514.1 380.4 L514.8 381.2 L515.4 382.0"/><path d="M521.2 355.1 L519.7 352.5"/><path d="M517.2 362.6 L520.3 362.4"/><path d="M515.0 371.5 L512.7 369.5"/><path d="M514.3 380.4 L516.3 378.1"/><path d="M536.0 381.0 L535.3 380.4 L534.7 379.8 L534.3 379.1 L534.1 378.2 L534.0 377.3 L533.9 376.5 L533.6 375.7 L533.1 375.0 L532.5 374.4 L531.8 373.8 L531.1 373.2 L530.6 372.5 L530.4 371.7 L530.4 370.8 L530.4 369.9 L530.4 369.1 L530.2 368.3 L529.7 367.5 L529.2 366.9 L528.5 366.2 L528.0 365.6 L527.7 364.8 L527.5 364.0 L527.5 363.1 L527.6 362.2 L527.5 361.3 L527.2 360.5 L526.7 359.7 L526.1 359.0 L525.5 358.3 L525.1 357.5 L524.9 356.7 L524.9 355.8 L525.0 354.8"/><path d="M533.1 375.9 L531.6 378.6"/><path d="M529.3 367.7 L532.3 368.2"/><path d="M526.2 359.0 L524.2 361.3"/><path d="M531.9 371.8 L532.1 371.0 L532.6 370.4 L533.2 369.7 L533.8 369.1 L534.4 368.5 L534.8 367.8 L535.0 367.0 L535.0 366.2 L535.1 365.3 L535.2 364.4 L535.4 363.7 L535.9 363.0 L536.5 362.4 L537.1 361.8 L537.7 361.1 L538.1 360.4 L538.3 359.6 L538.3 358.8 L538.3 357.9 L538.4 357.1 L538.7 356.3 L539.2 355.6 L539.8 355.0 L540.5 354.4 L541.0 353.8 L541.4 353.1 L541.5 352.3 L541.6 351.4 L541.6 350.5 L541.7 349.7"/><path d="M534.6 366.8 L536.3 369.3"/><path d="M538.2 358.7 L535.2 359.1"/><path d="M530.7 367.6 L531.5 367.3 L532.4 367.1 L533.2 366.8 L534.0 366.5 L534.6 365.9 L535.1 365.2 L535.5 364.4 L536.0 363.7 L536.6 363.1 L537.3 362.7 L538.1 362.4 L539.0 362.2 L539.8 361.9 L540.5 361.5 L541.1 360.9 L541.6 360.2 L542.0 359.4 L542.6 358.7 L543.2 358.2"/><path d="M535.6 364.5 L532.8 363.4"/><path d="M533.0 375.9 L533.8 375.7 L534.6 375.3 L535.2 374.8 L535.7 374.1 L536.1 373.4 L536.5 372.6 L537.0 371.9 L537.6 371.3 L538.4 371.0 L539.2 370.7 L540.0 370.4 L540.8 370.0 L541.4 369.5 L541.9 368.8 L542.3 368.0 L542.7 367.2 L543.2 366.5 L543.8 366.0 L544.6 365.7 L545.4 365.4 L546.3 365.1"/><path d="M537.3 372.3 L537.8 375.3"/><path d="M544.1 366.4 L541.3 365.4"/><path d="M535.1 379.4 L535.9 379.3 L536.7 378.9 L537.4 378.4 L538.0 377.8 L538.7 377.3 L539.4 376.9 L540.2 376.7 L541.0 376.7 L541.9 376.8 L542.8 376.8 L543.6 376.6 L544.3 376.3 L545.0 375.8 L545.6 375.2 L546.3 374.6 L547.0 374.3"/><path d="M540.3 377.2 L538.0 375.2"/><path d="M529.5 366.0 L529.3 365.2 L528.9 364.4 L528.5 363.6 L528.2 362.8 L528.2 362.0 L528.3 361.1"/><path d="M544.6 382.2 L544.7 383.0 L544.7 383.9 L544.5 384.7 L544.2 385.5 L543.7 386.2 L543.1 386.9 L542.6 387.6 L542.4 388.4 L542.3 389.2 L542.4 390.1 L542.5 391.0"/><path d="M543.1 387.7 L546.0 387.0"/><path d="M551.3 382.3 L551.2 383.1 L550.9 383.9 L550.5 384.7 L549.9 385.4 L549.4 386.1 L549.1 386.9 L548.9 387.7 L549.0 388.6 L549.1 389.5 L549.2 390.4 L549.0 391.2 L548.7 392.0 L548.2 392.7 L547.6 393.4 L547.2 394.2 L546.9 395.0 L546.9 395.8"/><path d="M549.4 387.8 L547.3 385.7"/><path d="M555.2 384.6 L555.3 385.4 L555.2 386.3 L555.1 387.1 L555.1 388.0 L555.3 388.8 L555.7 389.5 L556.2 390.2 L556.7 390.9 L557.2 391.7 L557.4 392.5 L557.4 393.3"/><path d="M556.2 390.2 L558.3 388.0"/><path d="M547.7 347.2 L548.0 348.1 L548.4 349.0 L549.0 349.7 L549.7 350.2 L550.6 350.6 L551.5 350.9 L552.2 351.4 L552.5 351.9 L553.1 351.7 L554.1 351.5 L555.0 351.3 L555.8 350.9 L556.4 350.2"/><path d="M551.9 351.8 L548.9 352.5"/><path d="M549.9 360.2 L550.7 360.7 L551.5 360.9 L552.4 361.0 L553.3 360.9 L554.2 360.9 L555.1 361.0 L555.9 361.4 L556.6 362.0 L557.3 362.6 L557.8 363.3 L558.5 363.9 L559.3 364.3 L560.2 364.5 L561.1 364.8 L561.9 365.2 L562.6 365.9 L563.1 366.6 L563.6 367.5 L564.1 368.2 L564.7 368.8 L565.6 369.2 L566.5 369.5 L567.4 369.8 L568.2 370.2 L568.8 370.8 L569.3 371.6 L569.8 372.5 L570.3 373.2 L570.9 373.8 L571.8 374.2 L572.7 374.5 L573.6 374.8 L574.4 375.2 L575.0 375.8 L575.5 376.6 L576.0 377.5"/><path d="M555.8 361.8 L555.1 358.9"/><path d="M563.0 366.8 L560.2 367.9"/><path d="M569.9 372.3 L570.3 369.3"/><path d="M553.5 369.1 L554.3 369.4 L555.1 369.5 L556.0 369.5 L556.9 369.6 L557.7 370.0 L558.4 370.5 L559.0 371.1 L559.6 371.8 L560.2 372.4 L560.9 372.8 L561.7 373.0 L562.6 373.1 L563.4 373.3 L564.2 373.5 L564.9 373.9 L565.5 374.5 L566.0 375.2 L566.5 375.9 L567.1 376.4"/><path d="M559.0 371.2 L556.4 372.8"/><path d="M559.8 378.8 L560.7 378.6 L561.7 378.5 L562.5 378.6 L563.3 378.9 L564.1 379.4 L564.9 379.9 L565.6 380.4 L566.4 380.7 L567.3 380.7 L568.2 380.6 L569.1 380.5 L570.0 380.5"/><path d="M565.7 380.0 L564.9 377.1"/><path d="M555.2 375.9 L555.9 376.4 L556.4 377.0 L556.7 377.8 L557.0 378.7 L557.1 379.6 L557.4 380.4 L557.9 381.0 L558.5 381.6 L559.3 382.1 L560.0 382.6 L560.7 383.1 L561.1 383.8 L561.4 384.6 L561.8 385.5 L562.1 386.3 L562.6 387.0 L563.3 387.6 L564.2 388.0 L565.0 388.3 L565.8 388.7 L566.5 389.3"/><path d="M558.3 380.7 L555.3 381.0"/><path d="M564.3 387.9 L565.0 384.9"/><path d="M562.9 347.2 L563.1 348.0 L563.2 348.9 L563.1 349.8 L563.1 350.6 L563.3 351.4 L563.7 352.2 L564.2 352.8 L564.8 353.5 L565.4 354.2 L565.8 354.9 L565.9 355.7 L565.9 356.6 L565.9 357.5 L566.0 358.4 L566.3 359.2 L566.8 359.9 L567.5 360.6 L568.1 361.2 L568.7 361.9 L569.0 362.7 L569.1 363.6 L569.1 364.6 L569.2 365.5 L569.4 366.3 L569.9 367.0 L570.6 367.6 L571.3 368.2 L572.0 368.8 L572.5 369.5 L572.7 370.3 L572.9 371.1 L573.0 372.0 L573.2 372.9 L573.6 373.6 L574.2 374.2 L574.9 374.8"/><path d="M564.4 352.8 L566.3 350.4"/><path d="M567.8 361.4 L564.8 361.0"/><path d="M571.6 369.0 L573.0 366.4"/><path d="M566.4 352.2 L566.6 353.1 L566.8 354.0 L567.1 354.8 L567.6 355.5 L568.2 356.1 L569.0 356.6 L569.7 357.1 L570.3 357.7 L570.7 358.4 L571.0 359.3 L571.1 360.2 L571.4 361.1 L571.7 361.8 L572.3 362.4 L573.0 363.0 L573.8 363.5 L574.5 364.0 L575.0 364.6 L575.3 365.4 L575.6 366.2 L575.8 367.1 L576.0 367.9 L576.5 368.6 L577.1 369.1 L577.9 369.6 L578.6 370.1 L579.3 370.7 L579.7 371.3 L580.0 372.1"/><path d="M569.4 357.3 L566.4 357.5"/><path d="M574.6 364.9 L575.8 362.2"/><path d="M573.5 350.0 L573.9 350.8 L574.4 351.4 L575.0 351.9 L575.8 352.3 L576.6 352.7 L577.4 353.0 L578.0 353.6 L578.5 354.3 L578.9 355.0 L579.2 355.9 L579.6 356.6 L580.2 357.2 L580.9 357.7 L581.7 358.1 L582.5 358.4 L583.2 358.7 L583.9 359.2 L584.4 359.9 L584.8 360.6 L585.2 361.4 L585.7 362.1 L586.3 362.6 L587.1 363.0 L587.9 363.3 L588.8 363.5 L589.5 363.9 L590.1 364.4 L590.7 364.9 L591.3 365.6 L591.9 366.3 L592.5 366.8 L593.3 367.1 L594.1 367.3 L595.0 367.4 L595.9 367.5 L596.7 367.7 L597.4 368.2"/><path d="M577.7 354.0 L578.4 351.0"/><path d="M584.2 360.2 L581.3 361.2"/><path d="M591.3 365.6 L591.1 362.5"/><path d="M572.3 345.5 L573.1 345.6 L573.9 345.6 L574.8 345.4 L575.7 345.2 L576.5 345.2 L577.3 345.4 L578.0 345.7 L578.8 346.2 L579.5 346.6 L580.3 346.9 L581.1 347.0 L582.0 346.9 L582.8 346.7 L583.7 346.6 L584.5 346.6 L585.3 346.8 L586.1 347.2 L586.7 347.9 L587.4 348.5 L588.2 348.9 L589.0 349.2 L590.0 349.2 L590.9 349.2 L591.8 349.3 L592.6 349.7 L593.3 350.2 L594.0 350.9 L594.7 351.6 L595.4 352.0 L596.3 352.2 L597.2 352.2 L598.2 352.1 L599.1 352.1 L599.9 352.4 L600.7 352.8 L601.4 353.4 L602.1 354.0"/><path d="M578.0 346.0 L576.0 348.3"/><path d="M586.8 347.7 L586.4 344.7"/><path d="M595.6 351.5 L593.3 353.4"/><path d="M584.4 351.3 L584.9 352.0 L585.5 352.7 L586.0 353.4 L586.2 354.2 L586.3 355.1 L586.2 355.9 L586.1 356.8 L586.1 357.7 L586.3 358.5 L586.7 359.2 L587.3 359.9"/><path d="M586.4 356.7 L588.5 354.5"/><path d="M579.9 358.5 L580.6 359.0 L581.2 359.6 L581.7 360.3 L582.0 361.1 L582.2 362.0 L582.4 362.9 L582.9 363.6 L583.5 364.2 L584.2 364.7 L585.0 365.1 L585.7 365.6 L586.2 366.3 L586.6 367.0 L586.8 367.9 L587.0 368.7 L587.0 369.6 L587.1 370.5 L587.6 371.3 L588.1 372.1 L588.6 372.9 L588.9 373.8 L588.9 374.7"/><path d="M583.3 363.3 L580.3 363.6"/><path d="M587.8 371.3 L590.1 369.2"/><path d="M566.0 339.5 L566.8 339.3 L567.6 339.3 L568.5 339.4 L569.4 339.6 L570.2 339.6 L571.0 339.4 L571.8 339.1 L572.5 338.6 L573.2 338.1 L574.0 337.7 L574.8 337.5 L575.6 337.6 L576.5 337.7 L577.4 337.9"/><path d="M571.7 338.8 L569.6 336.6"/><path d="M586.0 339.5 L586.8 339.8 L587.7 340.2 L588.5 340.5 L589.3 340.5 L590.2 340.4 L591.0 340.1 L591.8 339.8 L592.7 339.5 L593.5 339.5 L594.3 339.6 L595.2 340.0 L596.0 340.3 L596.8 340.5 L597.7 340.5 L598.5 340.3 L599.3 340.2 L600.2 340.2 L601.1 340.3 L601.9 340.6 L602.6 341.1 L603.3 341.7 L604.0 342.3 L604.7 342.6 L605.6 342.8 L606.5 342.8 L607.4 342.7 L608.3 342.7 L609.1 342.9 L609.8 343.3"/><path d="M591.8 340.0 L590.3 342.6"/><path d="M600.9 340.8 L600.2 337.8"/></g></svg>
<!-- v scrollbar -->
<div class="a" style="left:708.2px;top:54.6px;width:9.8px;height:459px;background:#3b3b3b"></div>
<svg class="a" style="left:708px;top:55px" width="10" height="8"><path d="M2.7 5.5 L5 3.2 L7.3 5.5" stroke="#888" stroke-width="0.9" fill="none"/></svg>
<svg class="a" style="left:708px;top:504px" width="10" height="8"><path d="M2.7 2.5 L5 4.8 L7.3 2.5" stroke="#888" stroke-width="0.9" fill="none"/></svg>
<div class="a" style="left:709.5px;top:271px;width:7.5px;height:15px;background:#565656;border-radius:4px"></div>
<div class="a" style="left:718px;top:38px;width:1px;height:485px;background:#2c2c2c"></div>
<!-- dock -->
<div class="a" style="left:719px;top:38px;width:21px;height:485px;background:#464646"></div>
<div class="a" style="left:719px;top:38px;width:21px;height:6.5px;background:#383838"></div>
<div class="a" style="left:733px;top:40px;width:1px;height:3px;background:#7a7a7a"></div>
<div class="a" style="left:735px;top:40px;width:1px;height:3px;background:#7a7a7a"></div>
<div class="a" style="left:738px;top:44.5px;width:1px;height:338.5px;background:#3c3c3c"></div>
<div class="dk" style="top:44.5px"></div>
<div class="dk" style="top:66.5px"></div>
<div class="dk" style="top:121.8px"></div>
<div class="dk" style="top:159.6px"></div>
<div class="dk" style="top:199.6px"></div>
<div class="dk" style="top:237.5px"></div>
<div class="dk" style="top:260.4px"></div>
<div class="dk" style="top:283.3px"></div>
<div class="dk" style="top:322.2px"></div>
<div class="dk" style="top:345.2px"></div>
<div class="dk" style="top:382.8px"></div>
<div class="dg" style="top:47.3px"></div><div class="dg" style="top:69.3px"></div><div class="dg" style="top:124.6px"></div>
<div class="dg" style="top:162.4px"></div><div class="dg" style="top:202.4px"></div><div class="dg" style="top:240.3px"></div>
<div class="dg" style="top:263.2px"></div><div class="dg" style="top:286.1px"></div><div class="dg" style="top:325px"></div>
<div class="dg" style="top:348px"></div>
<svg class="a" style="left:719px;top:44px" width="21" height="340" viewBox="719 44 21 340">
<defs><linearGradient id="dg1" x1="0" y1="0" x2="1" y2="1"><stop offset="0" stop-color="#f0f0f0"/><stop offset="1" stop-color="#6a6a6a"/></linearGradient>
<linearGradient id="dg2" x1="0" x2="1"><stop offset="0" stop-color="#4a4a4a"/><stop offset="1" stop-color="#d8d8d8"/></linearGradient></defs>
<!-- gradient pie -->
<path d="M725 54 A9.5 8.5 0 0 1 734.5 62.5 L725 62.5 Z" fill="url(#dg1)"/>
<!-- swatches -->
<rect x="724.5" y="77.5" width="10" height="7" fill="#d8d8d8"/><rect x="726" y="79" width="3" height="2.2" fill="#474747"/><rect x="730" y="79" width="3" height="2.2" fill="#777"/><rect x="726" y="82" width="7" height="1.2" fill="#777"/>
<!-- brushes -->
<path d="M726 93 h7 l-1 6.5 h-5z" fill="#d8d8d8"/><path d="M727 93 v-4 M729.5 93 v-5 M732 93 l1.5 -4" stroke="#d8d8d8" stroke-width="1"/>
<!-- club -->
<circle cx="729.5" cy="109" r="2.3" fill="#d8d8d8"/><circle cx="727" cy="112.5" r="2.3" fill="#d8d8d8"/><circle cx="732" cy="112.5" r="2.3" fill="#d8d8d8"/><path d="M729.5 112 l-1.5 4.5 h3z" fill="#d8d8d8"/>
<!-- gradient box -->
<rect x="724.8" y="130.5" width="9.5" height="8" fill="url(#dg2)" stroke="#cfcfcf" stroke-width="0.7"/>
<!-- transparency circles -->
<circle cx="728.5" cy="149.5" r="3.6" fill="#d8d8d8"/><circle cx="730.8" cy="152" r="3.6" fill="#8a8a8a"/>
<!-- sun -->
<circle cx="729.5" cy="173" r="3" fill="#d8d8d8"/><circle cx="729.5" cy="173" r="4.6" fill="none" stroke="#bdbdbd" stroke-width="1.2" stroke-dasharray="1 1"/>
<!-- transform -->
<rect x="727" y="184.5" width="7" height="7" fill="none" stroke="#d0d0d0" stroke-width="0.9"/><rect x="724.5" y="188.5" width="4.5" height="4" fill="#5a5a5a" stroke="#d0d0d0" stroke-width="0.8"/>
<!-- export -->
<path d="M731 206.5 h-5.5 v9 h9 v-5.5" fill="none" stroke="#d8d8d8" stroke-width="1"/><path d="M729 211.5 L734.5 206 M731.5 206 h3 v3" fill="none" stroke="#d8d8d8" stroke-width="1"/>
<!-- artboards -->
<rect x="724.5" y="221.5" width="6.5" height="6" fill="none" stroke="#d0d0d0" stroke-width="0.9"/><rect x="727.5" y="225" width="7" height="6" fill="#474747" stroke="#d0d0d0" stroke-width="0.9"/>
<!-- align lines -->
<g fill="#d8d8d8"><rect x="724.5" y="247" width="10" height="1.2"/><rect x="724.5" y="250" width="10" height="1.2"/><rect x="724.5" y="253" width="10" height="1.2"/></g>
<!-- palette -->
<path d="M724.5 274 C724 269 731 268 734.5 271 C735.5 273 733 273.5 733.5 275 C734 277 728 278 724.5 274Z" fill="#d8d8d8"/><circle cx="727" cy="273" r="0.8" fill="#474747"/><circle cx="729.5" cy="271.5" r="0.8" fill="#474747"/>
<!-- cc libraries -->
<circle cx="727" cy="294" r="2.2" fill="none" stroke="#d0d0d0" stroke-width="0.9"/><rect x="731" y="292" width="2.5" height="1.5" fill="#d0d0d0"/><rect x="731" y="295" width="2.5" height="1.5" fill="#d0d0d0"/><rect x="724.5" y="298" width="9" height="1.2" fill="#d0d0d0"/>
<!-- cc swirl -->
<ellipse cx="729.5" cy="312.3" rx="5" ry="3.6" fill="none" stroke="#d8d8d8" stroke-width="1.2"/><ellipse cx="729.5" cy="312.8" rx="2.6" ry="1.8" fill="none" stroke="#d8d8d8" stroke-width="0.9"/>
</svg>
<div class="t" style="left:724px;top:330.5px;font-size:9px;line-height:10px;color:#dcdcdc">A</div>
<div class="a" style="left:733px;top:331px;width:0.9px;height:8px;background:#dcdcdc"></div>
<div class="t" style="left:725px;top:352.5px;font-size:9.5px;line-height:10px;font-weight:bold;color:#dcdcdc">¶</div>
<div class="t" style="left:725px;top:367.5px;font-size:10px;line-height:11px;font-style:italic;font-family:'Liberation Serif',serif;color:#d0d0d0">O</div>

<!-- status bar -->
<div class="a" style="left:199px;top:513.4px;width:519px;height:9.6px;background:#393939"></div>
<div class="a" style="left:202px;top:514px;width:27px;height:9px;background:#414141"></div>
<div class="t" style="left:203.4px;top:515.6px;font-size:5.3px;line-height:7px;color:#d0d0d0">300%</div>
<div class="a" style="left:260px;top:514px;width:26px;height:9px;background:#3f3f3f"></div>
<svg class="a" style="left:228px;top:515px" width="120" height="8" viewBox="0 0 120 8">
<path d="M2.5 2.8 L4 4.3 L5.5 2.8" stroke="#bbb" stroke-width="0.8" fill="none"/>
<g fill="#5e5e5e"><rect x="17" y="1.5" width="0.8" height="4"/><path d="M18.3 3.5 l2 -2 v4z"/><path d="M26.5 3.5 l2 -2 v4z"/></g>
<path d="M60 2.8 L61.5 4.3 L63 2.8" stroke="#bbb" stroke-width="0.8" fill="none"/>
<g fill="#5e5e5e"><path d="M73 1.5 l2 2 l-2 2z"/><path d="M81 1.5 l2 2 l-2 2z"/><rect x="83.5" y="1.5" width="0.8" height="4"/></g>
</svg>
<div class="t" style="left:264.5px;top:515.5px;font-size:5.8px;line-height:7px;color:#d0d0d0">1</div>
<div class="t" style="left:353.5px;top:515.5px;font-size:5.8px;line-height:7px;color:#cacaca">Direct Selection</div>
<svg class="a" style="left:432px;top:515px" width="16" height="8"><path d="M1.5 1.3 L4.5 3.5 L1.5 5.7Z" fill="#d0d0d0"/><path d="M14 1.8 L12.2 3.5 L14 5.2" stroke="#777" stroke-width="0.8" fill="none"/></svg>
<div class="a" style="left:566px;top:515.5px;width:16px;height:6px;background:#555;border-radius:3px"></div>
<svg class="a" style="left:699px;top:515px" width="10" height="8"><path d="M3.5 1.8 L5.3 3.5 L3.5 5.2" stroke="#888" stroke-width="0.8" fill="none"/></svg>

</body></html>
